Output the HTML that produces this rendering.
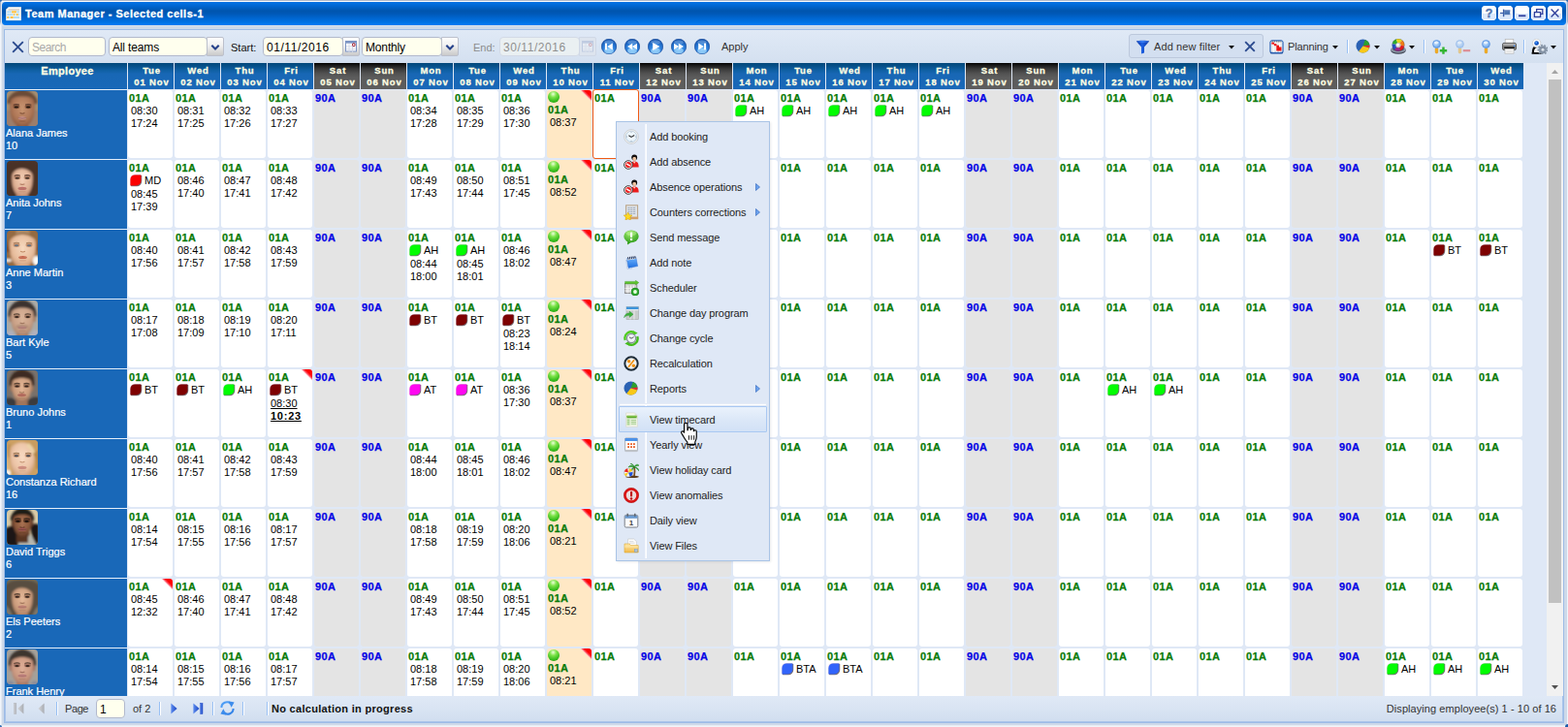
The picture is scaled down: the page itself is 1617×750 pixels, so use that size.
<!DOCTYPE html><html lang="en"><head><meta charset="utf-8"><title>Team Manager - Selected cells-1</title><style>
*{box-sizing:border-box}
html,body{margin:0;padding:0}
body{width:1617px;height:750px;overflow:hidden;background:#fff;font-family:"Liberation Sans",sans-serif;font-size:11px;color:#000;position:relative}
.a{position:absolute}
svg{display:block}
#frame{left:0;top:0;width:1617px;height:750px;background:#cdd9e9}
#edgeT{left:0;top:0;width:1617px;height:1px;background:#aeb9cb}
#edgeT2{left:0;top:1px;width:1617px;height:1px;background:#fafbfd}
#edgeL{left:0;top:2px;width:1px;height:746px;background:linear-gradient(#a4b1c8 0,#a4b1c8 20px,#f1f5fb 24px,#f1f5fb 100%)}
#edgeL2{left:1px;top:2px;width:1px;height:746px;background:#e3e9f2}
#edgeR{left:1616px;top:2px;width:1px;height:746px;background:linear-gradient(#a4b1c8 0,#a4b1c8 20px,#f1f5fb 24px,#f1f5fb 100%)}
#edgeB{left:0;top:748px;width:1617px;height:2px;background:linear-gradient(#e2e8f1,#f6f8fc)}
.cornerdot{width:2px;height:2px;background:#2f6cb4}
#title{left:2px;top:2px;width:1613px;height:24px;border-radius:4px;background:linear-gradient(#0472e4 0%,#0069d6 14%,#0055ae 38%,#0058b6 50%,#0066d0 70%,#0074e8 90%,#027af4 100%)}
#title .txt{left:24px;top:5px;color:#fff;-webkit-text-stroke:.3px #fff;font-weight:bold;font-size:11px;line-height:14px;letter-spacing:.5px;white-space:nowrap}
#sub{left:2px;top:26px;width:1613px;height:1px;background:#d9e0ea}
#panel{left:4px;top:30px;width:1609px;height:716px;border:1px solid #9dbbe6;background:#dfe8f6}
#tb{left:5px;top:31px;width:1607px;height:34px;background:linear-gradient(#e0e9f6 0%,#dae5f3 50%,#d4e0f0 100%)}
.fld{height:20px;border:1px solid #b2b9cd;border-radius:4px;background:#ffffee;font-size:12px;line-height:18px;padding:1px 0 0 3px;letter-spacing:-.15px;white-space:nowrap;overflow:hidden;color:#000}
.trg{width:18px;height:20px;border:1px solid #bcc0cc;border-radius:0 2px 2px 0;background:linear-gradient(#fefefe 0%,#f0f0f0 45%,#cacaca 100%)}
.lbl{font-size:11px;line-height:14px;margin-top:1px;white-space:nowrap;color:#111}
.sep{width:2px;height:14px;border-left:1px solid #98c0f4;border-right:1px solid #fff}
.dis{opacity:.45}
#hdr{left:5px;top:65px;width:1567px;height:27px}
.h{position:absolute;top:0;height:27px;color:#ffffe4;-webkit-text-stroke:.3px #ffffe4;font-weight:bold;font-size:9.5px;letter-spacing:.85px;line-height:12px;text-align:center;padding:2px 0 0 2px;background:linear-gradient(#03487a 0%,#07518a 12%,#1060a4 28%,#1867b5 42%,#1968b8 100%);white-space:nowrap}
.h.we{background:linear-gradient(#000 0%,#161616 7%,#383838 22%,#525252 40%,#5c5c5c 55%,#5d5d5d 100%)}
#body{left:5px;top:92px;width:1590px;height:626px;overflow:hidden;background:#dfe8f6}
.r{position:absolute;left:0;width:1567px;height:72px}
.e{position:absolute;left:0;top:0;width:126px;height:72px;background:#1968b8;border-top:1px solid #e6effa;color:#fff;font-size:11px;line-height:13px;white-space:nowrap}
.e .ph{position:absolute;left:2px;top:1px;width:32px;height:36px;border-radius:4px;overflow:hidden}
.e .nm{position:absolute;left:1px;top:38px;-webkit-text-stroke:.2px #fff}
.c{position:absolute;top:1px;width:46px;height:70px;background:#fff;border-radius:3px;padding:2px 0 0 1px;font-size:11px;line-height:13px;white-space:nowrap;overflow:hidden;color:#000}
.c.we{background:#e4e4e4}
.c.td{background:#ffe8c5;padding-top:1px}
.c.sel{border:1px solid #f05a14;padding:1px 0 0 0;left:-1px}
.c b{color:#087a08;letter-spacing:.4px;-webkit-text-stroke:.25px currentColor}
.c.we b{color:#0404e4}
.c .t{padding-left:2px}
.c .mk{display:inline-block;width:11px;height:11px;border-radius:4.5px .5px 5px .5px;vertical-align:-2px;margin:0 3px 0 2px;transform:translate(-.55px,-.6px);box-shadow:.6px .6px 0 .2px rgba(70,60,70,.75),-.4px -.4px 0 0 rgba(230,200,230,.6)}
.c .ml{height:13.500px}
.c .fl{position:absolute;right:0;top:0;width:12px;height:12px;background:linear-gradient(to bottom left,#ff0000 0%,#ff0202 31%,rgba(255,80,100,.95) 41%,rgba(255,190,200,.6) 47%,rgba(255,255,255,0) 51%)}
.c .ball{display:block;width:12px;height:12px;border-radius:6px;margin:0 0 1px 0;background:radial-gradient(circle at 45% 25%,#ecffd8 0%,#7ee44a 30%,#34ba1c 68%,#1c8a0c 100%)}
.c u{text-decoration:underline}
#sb{left:1595px;top:65px;width:17px;height:653px;background:#f1f1f1}
#sb .th{left:2px;top:17px;width:13px;height:540px;background:#c1c1c1}
#pt{left:5px;top:718px;width:1607px;height:27px;background:linear-gradient(#e0e9f6 0%,#d9e4f3 50%,#d1deef 100%);border-left:1px solid #a9c4ea;border-bottom:1px solid #a9c4ea;border-right:1px solid #a9c4ea}
#menu{left:635px;top:125px;width:159px;height:454px;border:1px solid #a9c4e6;background:#dfe8f6;box-shadow:1px 1px 2px rgba(80,90,110,.12)}
#menu .vl{left:29px;top:2px;width:2px;height:448px;border-left:1px solid #f4f7fc;border-right:1px solid #fdfeff;background:none}
.mi{position:absolute;left:2px;width:153px;height:26px;font-size:11px;line-height:14px;color:#222;white-space:nowrap;letter-spacing:-.1px}
.mi .ic{position:absolute;left:5px;top:5px;width:16px;height:16px}
.mi .tx{position:absolute;left:32px;top:6px}
.mi .ar{position:absolute;left:141px;top:9px}
.mi.hov{margin-top:-1px;height:27px;border:1px solid #a9c8f2;border-radius:1px;background:linear-gradient(#eaf2fc 0%,#dce8f8 50%,#d2e1f6 100%)}
.mi.hov .ic{left:4px;top:5px}.mi.hov .tx{left:31px;top:6px}
#msep{left:3px;top:290px;width:151px;height:2px;border-top:1px solid #e6ecf6;border-bottom:1px solid #fff;background:none}
</style></head><body>
<svg width="0" height="0" style="position:absolute">
<defs>
<radialGradient id="gball" cx="35%" cy="30%" r="75%"><stop offset="0" stop-color="#d8ffb0"/><stop offset="0.45" stop-color="#4fd62a"/><stop offset="1" stop-color="#1f9a10"/></radialGradient>
<radialGradient id="gnav" cx="50%" cy="72%" r="78%"><stop offset="0" stop-color="#66b4f8"/><stop offset="0.5" stop-color="#2a7cd8"/><stop offset="0.85" stop-color="#1458b4"/><stop offset="1" stop-color="#0c4098"/></radialGradient>
<linearGradient id="gfun" x1="0" y1="0" x2="1" y2="0"><stop offset="0" stop-color="#062c98"/><stop offset="0.45" stop-color="#1c60e4"/><stop offset="1" stop-color="#062c98"/></linearGradient>
<linearGradient id="gblue" x1="0" y1="0" x2="1" y2="0"><stop offset="0" stop-color="#5c8cf0"/><stop offset="1" stop-color="#1a44c0"/></linearGradient>
<linearGradient id="ggray" x1="0" y1="0" x2="1" y2="0"><stop offset="0" stop-color="#d4d6da"/><stop offset="1" stop-color="#a9acb2"/></linearGradient>
<radialGradient id="gglass" cx="40%" cy="35%" r="70%"><stop offset="0" stop-color="#d8ecff"/><stop offset="1" stop-color="#5a9cea"/></radialGradient>
<radialGradient id="gclock" cx="50%" cy="40%" r="70%"><stop offset="0" stop-color="#ffffff"/><stop offset="0.7" stop-color="#e6eef5"/><stop offset="1" stop-color="#9fb0c0"/></radialGradient>
<radialGradient id="ggreen2" cx="40%" cy="30%" r="80%"><stop offset="0" stop-color="#9be86a"/><stop offset="1" stop-color="#2a9a18"/></radialGradient>
<linearGradient id="gfold" x1="0" y1="0" x2="0" y2="1"><stop offset="0" stop-color="#ffe9a8"/><stop offset="1" stop-color="#f2b94a"/></linearGradient>
<linearGradient id="gnote" x1="0" y1="0" x2="0" y2="1"><stop offset="0" stop-color="#6db4ff"/><stop offset="1" stop-color="#1f6fe0"/></linearGradient>
</defs></svg>
<div id="frame" class="a"></div><div id="edgeT" class="a"></div><div id="edgeT2" class="a"></div><div id="edgeL" class="a"></div><div id="edgeL2" class="a"></div><div id="edgeR" class="a"></div><div id="edgeB" class="a"></div>
<div class="a cornerdot" style="left:0;top:0;border-radius:0 0 3px 0"></div><div class="a cornerdot" style="left:1615px;top:0;border-radius:0 0 0 3px"></div><div class="a cornerdot" style="left:0;top:748px;border-radius:0 3px 0 0"></div><div class="a cornerdot" style="left:1614px;top:747px;width:3px;height:3px;border-radius:3px 0 0 0;background:#1a5aa8"></div>
<div id="title" class="a"><div class="a" style="left:4px;top:5px"><svg width="16" height="16" viewBox="0 0 16 16" ><path d="M3 0.200H15.800V14H0.200V2.800z" fill="#fdfcf8" stroke="#ece6da" stroke-width="0.4"/><rect x="2.600" y="2.300" width="11.400" height="1.400" fill="#cfc8c0"/><rect x="1.4" y="4.3" width="4.50" height="2.1" fill="#a9d9f9"/><rect x="6.1" y="4.3" width="4.80" height="2.1" fill="#ffb92c"/><rect x="11.1" y="4.3" width="2.90" height="2.1" fill="#a9d9f9"/><rect x="1.4" y="7.1" width="6.20" height="2.1" fill="#a9d9f9"/><rect x="7.9" y="7.1" width="1.30" height="2.1" fill="#ffb92c"/><rect x="9.5" y="7.1" width="1.20" height="2.1" fill="#a9d9f9"/><rect x="11" y="7.1" width="1.70" height="2.1" fill="#ffb92c"/><rect x="12.9" y="7.1" width="1.10" height="2.1" fill="#a9d9f9"/><rect x="1.4" y="9.9" width="1.40" height="2.1" fill="#ffb92c"/><rect x="3" y="9.9" width="1.60" height="2.1" fill="#a9d9f9"/><rect x="4.8" y="9.9" width="2.90" height="2.1" fill="#ffb92c"/><rect x="8" y="9.9" width="6.00" height="2.1" fill="#a9d9f9"/><path d="M3.700 4.300v7.700M6 4.300v7.700M8.300 4.300v7.700M10.600 4.300v7.700M12.800 4.300v7.700" stroke="#fff" stroke-width="0.35" opacity="0.7"/></svg></div><div class="a txt">Team Manager - Selected cells-1</div>
<div class="a" style="left:1526px;top:4px"><svg width="15" height="15" viewBox="0 0 15 15" ><path d="M2 0h11l2 2v11l-2 2H2l-2-2V2z" fill="#fdfeff"/><path d="M1 8h13v5l-1.4 1.4H2.4L1 13z" fill="#dce8fb"/><text x="7.5" y="12" font-family="Liberation Sans, sans-serif" font-weight="bold" font-size="12.500" fill="#5878b0" stroke="#5878b0" stroke-width="0.400" text-anchor="middle">?</text></svg></div>
<div class="a" style="left:1543px;top:4px"><svg width="15" height="15" viewBox="0 0 15 15" ><path d="M2 0h11l2 2v11l-2 2H2l-2-2V2z" fill="#fdfeff"/><path d="M1 8h13v5l-1.4 1.4H2.4L1 13z" fill="#dce8fb"/><path d="M2 7.5h4" stroke="#3b5ea8" stroke-width="1.2"/><path d="M5.6 3.6v7.6" stroke="#3b5ea8" stroke-width="1.4"/><rect x="6.2" y="5.2" width="6" height="4" fill="#4a74b4"/><path d="M6.2 4.9h6.2" stroke="#3b5ea8" stroke-width="1"/></svg></div>
<div class="a" style="left:1560px;top:4px"><svg width="15" height="15" viewBox="0 0 15 15" ><path d="M2 0h11l2 2v11l-2 2H2l-2-2V2z" fill="#fdfeff"/><path d="M1 8h13v5l-1.4 1.4H2.4L1 13z" fill="#dce8fb"/><rect x="4" y="9.4" width="7.4" height="1.8" fill="#30409c"/></svg></div>
<div class="a" style="left:1577px;top:4px"><svg width="15" height="15" viewBox="0 0 15 15" ><path d="M2 0h11l2 2v11l-2 2H2l-2-2V2z" fill="#fdfeff"/><path d="M1 8h13v5l-1.4 1.4H2.4L1 13z" fill="#dce8fb"/><rect x="5.6" y="3.6" width="6.2" height="4.8" fill="none" stroke="#30409c" stroke-width="1.3"/><rect x="3.4" y="6.6" width="6.2" height="4.8" fill="#f4f8ff" stroke="#30409c" stroke-width="1.3"/></svg></div>
<div class="a" style="left:1594px;top:4px"><svg width="15" height="15" viewBox="0 0 15 15" ><path d="M2 0h11l2 2v11l-2 2H2l-2-2V2z" fill="#fdfeff"/><path d="M1 8h13v5l-1.4 1.4H2.4L1 13z" fill="#dce8fb"/><path d="M3.6 3.6l7.8 7.8M11.4 3.6l-7.8 7.8" stroke="#30409c" stroke-width="1.4"/></svg></div>
</div><div id="sub" class="a"></div>
<div id="panel" class="a"></div>
<div id="tb" class="a"></div>
<div class="a" style="left:11.5px;top:41.5px;"><svg width="13" height="13" viewBox="0 0 13 13" ><path d="M1.2 1.2L11.8 11.8M11.8 1.2L1.2 11.8" stroke="#2b4a8e" stroke-width="1.9" fill="none" stroke-linecap="butt"/></svg></div>
<div class="a fld" style="left:29px;top:38px;width:80px"><span style="color:#a9a9a9;letter-spacing:-.5px">Search</span></div>
<div class="a fld" style="left:112px;top:38px;width:102px">All teams</div>
<div class="a trg" style="left:213px;top:38px;"><div class="a" style="left:3px;top:6px"><svg width="10" height="8" viewBox="0 0 10 8" ><path d="M1.3 1.8L5 5.6L8.7 1.8" stroke="#25408a" stroke-width="2.1" fill="none"/></svg></div></div>
<div class="a lbl" style="left:238px;top:41px;">Start:</div>
<div class="a fld" style="left:271px;top:38px;width:83px"><span style="letter-spacing:.55px">01/11/2016</span></div>
<div class="a trg" style="left:353px;top:38px;"><div class="a" style="left:2px;top:3px"><svg width="12" height="12" viewBox="0 0 12 12" ><g opacity="1"><rect x="0.5" y="0.5" width="11" height="10.500" fill="#fff" stroke="#7c94c4"/><rect x="0.5" y="0.5" width="11" height="2.200" fill="#7c94c4"/><path d="M1 6h10M1 8.8h10M4 3v9M7.5 3v9" stroke="#cfd6e6" stroke-width="0.9"/><circle cx="8.8" cy="4.2" r="1.4" fill="#fff" stroke="#a01020" stroke-width="1"/></g></svg></div></div>
<div class="a fld" style="left:373px;top:38px;width:83px">Monthly</div>
<div class="a trg" style="left:455px;top:38px;"><div class="a" style="left:3px;top:6px"><svg width="10" height="8" viewBox="0 0 10 8" ><path d="M1.3 1.8L5 5.6L8.7 1.8" stroke="#25408a" stroke-width="2.1" fill="none"/></svg></div></div>
<div class="a lbl" style="left:488px;top:41px;color:#8c8c8c">End:</div>
<div class="a fld" style="left:515px;top:38px;width:83px;background:#eaf0f2;border-color:#d3dae6;color:#909090"><span style="letter-spacing:.55px">30/11/2016</span></div>
<div class="a trg" style="left:597px;top:38px;background:#dde4ee;border-color:#d0d8e6"><div class="a" style="left:2px;top:3px"><svg width="12" height="12" viewBox="0 0 12 12" ><g opacity="0.3"><rect x="0.5" y="0.5" width="11" height="10.500" fill="#fff" stroke="#7c94c4"/><rect x="0.5" y="0.5" width="11" height="2.200" fill="#7c94c4"/><path d="M1 6h10M1 8.8h10M4 3v9M7.5 3v9" stroke="#cfd6e6" stroke-width="0.9"/><circle cx="8.8" cy="4.2" r="1.4" fill="#fff" stroke="#a01020" stroke-width="1"/></g></svg></div></div>
<div class="a" style="left:620px;top:40px;"><svg width="16" height="16" viewBox="0 0 16 16" ><circle cx="8" cy="8" r="7.7" fill="url(#gnav)" stroke="#0c3f92" stroke-width="0.6"/><ellipse cx="8" cy="12.4" rx="4.8" ry="2.8" fill="#b4e4ff" opacity="0.6"/><ellipse cx="8" cy="3.6" rx="4.8" ry="2.2" fill="#fff" opacity="0.22"/><rect x="3.9" y="4.6" width="2" height="6.8" fill="#fff"/><path d="M11.8 4.400v7.200L6.200 8z" fill="#fff"/></svg></div>
<div class="a" style="left:644px;top:40px;"><svg width="16" height="16" viewBox="0 0 16 16" ><circle cx="8" cy="8" r="7.7" fill="url(#gnav)" stroke="#0c3f92" stroke-width="0.6"/><ellipse cx="8" cy="12.4" rx="4.8" ry="2.8" fill="#b4e4ff" opacity="0.6"/><ellipse cx="8" cy="3.6" rx="4.8" ry="2.2" fill="#fff" opacity="0.22"/><path d="M8.200 4.800v6.400L3 8z" fill="#fff"/><path d="M13 4.800v6.400L7.800 8z" fill="#fff"/></svg></div>
<div class="a" style="left:668px;top:40px;"><svg width="16" height="16" viewBox="0 0 16 16" ><circle cx="8" cy="8" r="7.7" fill="url(#gnav)" stroke="#0c3f92" stroke-width="0.6"/><ellipse cx="8" cy="12.4" rx="4.8" ry="2.8" fill="#b4e4ff" opacity="0.6"/><ellipse cx="8" cy="3.6" rx="4.8" ry="2.2" fill="#fff" opacity="0.22"/><path d="M5.200 4v8L12.400 8z" fill="#fff"/></svg></div>
<div class="a" style="left:692px;top:40px;"><svg width="16" height="16" viewBox="0 0 16 16" ><circle cx="8" cy="8" r="7.7" fill="url(#gnav)" stroke="#0c3f92" stroke-width="0.6"/><ellipse cx="8" cy="12.4" rx="4.8" ry="2.8" fill="#b4e4ff" opacity="0.6"/><ellipse cx="8" cy="3.6" rx="4.8" ry="2.2" fill="#fff" opacity="0.22"/><path d="M3 4.800v6.400L8.200 8z" fill="#fff"/><path d="M7.800 4.800v6.400L13 8z" fill="#fff"/></svg></div>
<div class="a" style="left:716px;top:40px;"><svg width="16" height="16" viewBox="0 0 16 16" ><circle cx="8" cy="8" r="7.7" fill="url(#gnav)" stroke="#0c3f92" stroke-width="0.6"/><ellipse cx="8" cy="12.4" rx="4.8" ry="2.8" fill="#b4e4ff" opacity="0.6"/><ellipse cx="8" cy="3.6" rx="4.8" ry="2.2" fill="#fff" opacity="0.22"/><path d="M4.200 4.400v7.200L9.800 8z" fill="#fff"/><rect x="10.100" y="4.600" width="2" height="6.800" fill="#fff"/></svg></div>
<div class="a lbl" style="left:744px;top:40px;color:#333">Apply</div>
<div class="a" style="left:1164px;top:35px;width:139px;height:25px;border:1px solid #bcc8dc;border-radius:3px;background:#d3dff0"></div>
<div class="a" style="left:1171px;top:41px;"><svg width="15" height="15" viewBox="0 0 15 15" ><path d="M0.8 1.6C3 0.4 12 0.4 14.2 1.6L9 7.6V13.6L6 14.4V7.6z" fill="url(#gfun)"/><ellipse cx="7.5" cy="1.900" rx="5.800" ry="1" fill="#4a90ff" opacity="0.600"/></svg></div>
<div class="a lbl" style="left:1190px;top:40px;color:#333;letter-spacing:.12px">Add new filter</div>
<div class="a" style="left:1267px;top:47px;"><svg width="6" height="4" viewBox="0 0 6 4" ><path d="M0 0h6L3 3.4z" fill="#111"/></svg></div>
<div class="a" style="left:1283px;top:42px;"><svg width="12" height="12" viewBox="0 0 12 12" ><path d="M1.2 1.2L10.8 10.8M10.8 1.2L1.2 10.8" stroke="#2b4a8e" stroke-width="1.9" fill="none" stroke-linecap="butt"/></svg></div>
<div class="a" style="left:1309px;top:41px;"><svg width="15" height="15" viewBox="0 0 15 15" ><rect x="0.600" y="0.600" width="13.800" height="14" rx="2.200" fill="#1c4c9c"/><rect x="0.600" y="0.600" width="13.800" height="12.800" rx="2.200" fill="#3a74c4"/><rect x="1.600" y="1.400" width="11.800" height="11.400" rx="1" fill="#ececec"/><path d="M4.600 2.600v10.200M7.600 2.600v10.200M10.600 2.600v10.200" stroke="#fdfdfd" stroke-width="1"/><path d="M2.600 1.900h9.800" stroke="#4c4c54" stroke-width="0.900" stroke-dasharray="1.300 0.900"/><rect x="2.400" y="2.700" width="2.600" height="1.900" fill="#ec1010"/><rect x="4.800" y="4.200" width="2.700" height="2" fill="#ec1010"/><rect x="7.300" y="5.700" width="2.700" height="5.800" fill="#ec1010"/><rect x="9.800" y="7.500" width="2.700" height="4" fill="#ec1010"/></svg></div>
<div class="a lbl" style="left:1328px;top:40px;color:#333;letter-spacing:-.15px">Planning</div>
<div class="a" style="left:1374px;top:47px;"><svg width="6" height="4" viewBox="0 0 6 4" ><path d="M0 0h6L3 3.4z" fill="#111"/></svg></div>
<div class="a sep" style="left:1389px;top:41px;"></div>
<div class="a" style="left:1398px;top:39.5px;"><svg width="15" height="15" viewBox="0 0 15 15" ><circle cx="7.5" cy="7.5" r="7" fill="#2a62b4"/><path d="M7.5 7.5L9.8 0.9A7 7 0 0 1 14.4 6.6z" fill="#2da02d"/><path d="M7.5 7.5L14.4 6.6A7 7 0 0 1 14.2 9.6z" fill="#e82828"/><path d="M7.5 7.5L14.2 9.6A7 7 0 0 1 3.2 13z" fill="#f8c818"/></svg></div>
<div class="a" style="left:1417px;top:47px;"><svg width="6" height="4" viewBox="0 0 6 4" ><path d="M0 0h6L3 3.4z" fill="#111"/></svg></div>
<div class="a" style="left:1433.5px;top:39.5px;"><svg width="16" height="16" viewBox="0 0 16 16" ><ellipse cx="8" cy="12" rx="7.800" ry="3.800" fill="#3e4654"/><ellipse cx="8" cy="11" rx="7.800" ry="3.600" fill="#8e98a8"/><ellipse cx="8" cy="10.600" rx="6" ry="2.400" fill="#5a6474"/><path d="M8 6.300L1.80 5.21A6.300 6.300 0 0 1 5.85 0.38z" fill="#2cac2c"/><path d="M8 6.300L5.85 0.38A6.300 6.300 0 0 1 12.05 1.47z" fill="#e8d41c"/><path d="M8 6.300L12.05 1.47A6.300 6.300 0 0 1 14.20 7.39z" fill="#f07c14"/><path d="M8 6.300L14.20 7.39A6.300 6.300 0 0 1 10.15 12.22z" fill="#e01c1c"/><path d="M8 6.300L10.15 12.22A6.300 6.300 0 0 1 3.95 11.13z" fill="#a0248c"/><path d="M8 6.300L3.95 11.13A6.300 6.300 0 0 1 1.80 5.21z" fill="#2450c4"/><circle cx="8" cy="6.300" r="6.300" fill="none" stroke="#1c2430" stroke-width="0.500" opacity="0.500"/><circle cx="8" cy="6.600" r="2.700" fill="#c8c4c0"/><circle cx="7.600" cy="6.200" r="1.500" fill="#f8f8f8"/></svg></div>
<div class="a" style="left:1453px;top:47px;"><svg width="6" height="4" viewBox="0 0 6 4" ><path d="M0 0h6L3 3.4z" fill="#111"/></svg></div>
<div class="a sep" style="left:1468px;top:41px;"></div>
<div class="a" style="left:1477px;top:40.5px;"><svg width="16" height="16" viewBox="0 0 16 16" ><g opacity="1"><rect x="3.100" y="8.200" width="2.800" height="5.800" rx="1.200" fill="#f4ac1c" stroke="#d08c10" stroke-width="0.400"/><circle cx="4.500" cy="4.500" r="3.900" fill="url(#gglass)" stroke="#5c94e0" stroke-width="0.900"/><ellipse cx="4.300" cy="3" rx="2.200" ry="1.200" fill="#fff" opacity="0.600"/><path d="M7.800 11.200h7.400M11.500 7.600v7.200" stroke="#30b430" stroke-width="2.400"/></g></svg></div>
<div class="a" style="left:1501px;top:40.5px;"><svg width="16" height="16" viewBox="0 0 16 16" ><g opacity="0.5"><rect x="3.100" y="8.200" width="2.800" height="5.800" rx="1.200" fill="#f4ac1c" stroke="#d08c10" stroke-width="0.400"/><circle cx="4.500" cy="4.500" r="3.900" fill="url(#gglass)" stroke="#5c94e0" stroke-width="0.900"/><ellipse cx="4.300" cy="3" rx="2.200" ry="1.200" fill="#fff" opacity="0.600"/><path d="M7.800 11.200h7.400" stroke="#e03838" stroke-width="2.200"/></g></svg></div>
<div class="a" style="left:1527.5px;top:40.5px;"><svg width="16" height="16" viewBox="0 0 16 16" ><g opacity="1"><rect x="3.100" y="8.200" width="2.800" height="5.800" rx="1.200" fill="#f4ac1c" stroke="#d08c10" stroke-width="0.400"/><circle cx="4.500" cy="4.500" r="3.900" fill="url(#gglass)" stroke="#5c94e0" stroke-width="0.900"/><ellipse cx="4.300" cy="3" rx="2.200" ry="1.200" fill="#fff" opacity="0.600"/></g></svg></div>
<div class="a" style="left:1549px;top:40px;"><svg width="15" height="16" viewBox="0 0 15 16" ><rect x="3.200" y="0.400" width="8.600" height="5.200" fill="#fcfcfc" stroke="#b4b4b4" stroke-width="0.700"/><rect x="0.500" y="4.400" width="14" height="7.200" rx="1.500" fill="#868686" stroke="#4c4c4c" stroke-width="0.800"/><rect x="1.200" y="5" width="12.600" height="1.600" fill="#b4b4b4"/><rect x="2.200" y="8.400" width="10.600" height="1.800" fill="#141414"/><rect x="3" y="10.400" width="9" height="4.800" fill="#fcfcfc" stroke="#b4b4b4" stroke-width="0.700"/><path d="M4.400 12.200h6.200M4.400 13.600h6.200" stroke="#d8d8d8" stroke-width="0.700"/><circle cx="12.600" cy="7.200" r="0.800" fill="#3a8cff"/></svg></div>
<div class="a sep" style="left:1571px;top:41px;"></div>
<div class="a" style="left:1579px;top:40px;"><svg width="17" height="16" viewBox="0 0 17 16" ><path d="M2.200 14.600C1.800 10.400 3.200 8.600 5.600 8" stroke="#0c0c0c" stroke-width="2.400" fill="none"/><path d="M0.600 14.800h10" stroke="#0c0c0c" stroke-width="2"/><path d="M3 14C3 11 4 9.600 6 9.200L8.600 14z" fill="#f4f4f4"/><circle cx="5.600" cy="4.500" r="4.300" fill="#fafafa" stroke="#c8c8c8" stroke-width="0.700"/><circle cx="5.600" cy="4.500" r="2.300" fill="#0c50c0"/><circle cx="5.200" cy="3.900" r="1" fill="#4c9cff"/><circle cx="12" cy="11.200" r="3.900" fill="#8492a4"/><circle cx="12" cy="11.200" r="4.600" fill="none" stroke="#8492a4" stroke-width="1.700" stroke-dasharray="1.800 1.400"/><circle cx="12" cy="11.200" r="1.500" fill="#dce4ec"/></svg></div>
<div class="a" style="left:1599px;top:47px;"><svg width="6" height="4" viewBox="0 0 6 4" ><path d="M0 0h6L3 3.4z" fill="#111"/></svg></div>
<div id="hdr" class="a">
<div class="h" style="left:0;width:126px;font-size:11px;letter-spacing:.3px;padding:2px 0 0 3px;line-height:13px">Employee</div>
<div class="h" style="left:127px;width:47px">Tue<br>01 Nov</div>
<div class="h" style="left:175px;width:47px">Wed<br>02 Nov</div>
<div class="h" style="left:223px;width:47px">Thu<br>03 Nov</div>
<div class="h" style="left:271px;width:47px">Fri<br>04 Nov</div>
<div class="h we" style="left:319px;width:47px">Sat<br>05 Nov</div>
<div class="h we" style="left:367px;width:47px">Sun<br>06 Nov</div>
<div class="h" style="left:415px;width:47px">Mon<br>07 Nov</div>
<div class="h" style="left:463px;width:47px">Tue<br>08 Nov</div>
<div class="h" style="left:511px;width:47px">Wed<br>09 Nov</div>
<div class="h" style="left:559px;width:47px">Thu<br>10 Nov</div>
<div class="h" style="left:607px;width:47px">Fri<br>11 Nov</div>
<div class="h we" style="left:655px;width:47px">Sat<br>12 Nov</div>
<div class="h we" style="left:703px;width:47px">Sun<br>13 Nov</div>
<div class="h" style="left:751px;width:47px">Mon<br>14 Nov</div>
<div class="h" style="left:799px;width:47px">Tue<br>15 Nov</div>
<div class="h" style="left:847px;width:47px">Wed<br>16 Nov</div>
<div class="h" style="left:895px;width:47px">Thu<br>17 Nov</div>
<div class="h" style="left:943px;width:47px">Fri<br>18 Nov</div>
<div class="h we" style="left:991px;width:47px">Sat<br>19 Nov</div>
<div class="h we" style="left:1039px;width:47px">Sun<br>20 Nov</div>
<div class="h" style="left:1087px;width:47px">Mon<br>21 Nov</div>
<div class="h" style="left:1135px;width:47px">Tue<br>22 Nov</div>
<div class="h" style="left:1183px;width:47px">Wed<br>23 Nov</div>
<div class="h" style="left:1231px;width:47px">Thu<br>24 Nov</div>
<div class="h" style="left:1279px;width:47px">Fri<br>25 Nov</div>
<div class="h we" style="left:1327px;width:47px">Sat<br>26 Nov</div>
<div class="h we" style="left:1375px;width:47px">Sun<br>27 Nov</div>
<div class="h" style="left:1423px;width:47px">Mon<br>28 Nov</div>
<div class="h" style="left:1471px;width:47px">Tue<br>29 Nov</div>
<div class="h" style="left:1519px;width:47px">Wed<br>30 Nov</div>
</div>
<div id="body" class="a">
<div class="r" style="top:0px">
<div class="e"><div class="ph"><svg width="32" height="36" viewBox="0 0 32 36" style="display:block"><defs><filter id="fb0" x="-20%" y="-20%" width="140%" height="140%"><feGaussianBlur stdDeviation="1.0"/></filter><filter id="fb0s" x="-30%" y="-30%" width="160%" height="160%"><feGaussianBlur stdDeviation="0.7"/></filter><radialGradient id="sk0" cx="50%" cy="40%" r="65%"><stop offset="0" stop-color="#c89470"/><stop offset="0.6" stop-color="#ae7656"/><stop offset="1" stop-color="#7e5038"/></radialGradient></defs><rect width="32" height="36" fill="#a48e72"/><g filter="url(#fb0)"><rect x="-2" y="20" width="36" height="20" fill="#9c7e6c"/><path d="M0.6999999999999993 13C-0.8000000000000007 5 10 -1.5 16 -1.5S32.8 5 31.3 13z" fill="#6a4c38"/><rect x="10" y="32" width="12" height="12" fill="#7e5038"/><path d="M3.1999999999999993 16.3C3.1999999999999993 5.5 7.040000000000001 3.5 16 3.5S28.8 5.5 28.8 16.3C28.8 25.3 26.496000000000002 34 19 37Q16 38.2 13 37C5.504 34 3.1999999999999993 25.3 3.1999999999999993 16.3z" fill="url(#sk0)"/><path d="M2.1999999999999993 11C1.1999999999999993 3.5 10 -0.5 16 -0.5S30.8 3.5 29.8 11C28.8 7.5 23 5.5 16 5.5S3.1999999999999993 7.5 2.1999999999999993 11z" fill="#6a4c38"/></g><g filter="url(#fb0s)"><ellipse cx="9.856" cy="16.0" rx="3.500" ry="2.200" fill="#7e5038" opacity="0.85"/><ellipse cx="22.144" cy="16.0" rx="3.500" ry="2.200" fill="#7e5038" opacity="0.85"/><ellipse cx="9.856" cy="16.6" rx="2.200" ry="1" fill="#1c100c" opacity="0.9"/><ellipse cx="22.144" cy="16.6" rx="2.200" ry="1" fill="#1c100c" opacity="0.9"/><path d="M6.656 14.3q3.200-1.500 6.200-.2M19.144 14.100000000000001q3-1.300 6.200 .2" stroke="#4a3024" stroke-width="1.100" fill="none" opacity="0.8"/><path d="M14.8 17.3L14.5 22.3h3L17.2 17.3z" fill="#c89470" opacity="0.6"/><path d="M13.6 22.6q2.400 1.400 4.800 0" stroke="#7e5038" stroke-width="1.100" fill="none"/><ellipse cx="16" cy="27.8" rx="4.400" ry="1.600" fill="#cc9494"/><path d="M11.6 27.7q4.400 .8 8.800 0" stroke="#7e5038" stroke-width="0.600" fill="none"/><ellipse cx="16" cy="31.0" rx="3.600" ry="1" fill="#7e5038" opacity="0.35"/></g></svg></div><div class="nm">Alana James<br>10</div></div>
<div class="c" style="left:127px"><b>01A</b><div class="t">08:30</div><div class="t">17:24</div></div>
<div class="c" style="left:175px"><b>01A</b><div class="t">08:31</div><div class="t">17:25</div></div>
<div class="c" style="left:223px"><b>01A</b><div class="t">08:32</div><div class="t">17:26</div></div>
<div class="c" style="left:271px"><b>01A</b><div class="t">08:33</div><div class="t">17:27</div></div>
<div class="c we" style="left:319px"><b>90A</b></div>
<div class="c we" style="left:367px"><b>90A</b></div>
<div class="c" style="left:415px"><b>01A</b><div class="t">08:34</div><div class="t">17:28</div></div>
<div class="c" style="left:463px"><b>01A</b><div class="t">08:35</div><div class="t">17:29</div></div>
<div class="c" style="left:511px"><b>01A</b><div class="t">08:36</div><div class="t">17:30</div></div>
<div class="c td" style="left:559px"><i class="ball"></i><b>01A</b><div class="t">08:37</div><i class="fl"></i></div>
<div class="c sel" style="left:606px;width:48px;height:72px;top:0"><div style="padding:1px 0 0 1px"><b>01A</b></div></div>
<div class="c we" style="left:655px"><b>90A</b></div>
<div class="c we" style="left:703px"><b>90A</b></div>
<div class="c" style="left:751px"><b>01A</b><div class="ml"><i class="mk" style="background:#02fd02"></i>AH</div></div>
<div class="c" style="left:799px"><b>01A</b><div class="ml"><i class="mk" style="background:#02fd02"></i>AH</div></div>
<div class="c" style="left:847px"><b>01A</b><div class="ml"><i class="mk" style="background:#02fd02"></i>AH</div></div>
<div class="c" style="left:895px"><b>01A</b><div class="ml"><i class="mk" style="background:#02fd02"></i>AH</div></div>
<div class="c" style="left:943px"><b>01A</b><div class="ml"><i class="mk" style="background:#02fd02"></i>AH</div></div>
<div class="c we" style="left:991px"><b>90A</b></div>
<div class="c we" style="left:1039px"><b>90A</b></div>
<div class="c" style="left:1087px"><b>01A</b></div>
<div class="c" style="left:1135px"><b>01A</b></div>
<div class="c" style="left:1183px"><b>01A</b></div>
<div class="c" style="left:1231px"><b>01A</b></div>
<div class="c" style="left:1279px"><b>01A</b></div>
<div class="c we" style="left:1327px"><b>90A</b></div>
<div class="c we" style="left:1375px"><b>90A</b></div>
<div class="c" style="left:1423px"><b>01A</b></div>
<div class="c" style="left:1471px"><b>01A</b></div>
<div class="c" style="left:1519px"><b>01A</b></div>
</div>
<div class="r" style="top:72px">
<div class="e"><div class="ph"><svg width="32" height="36" viewBox="0 0 32 36" style="display:block"><defs><filter id="fb1" x="-20%" y="-20%" width="140%" height="140%"><feGaussianBlur stdDeviation="1.0"/></filter><filter id="fb1s" x="-30%" y="-30%" width="160%" height="160%"><feGaussianBlur stdDeviation="0.7"/></filter><radialGradient id="sk1" cx="50%" cy="40%" r="65%"><stop offset="0" stop-color="#f2cdb4"/><stop offset="0.6" stop-color="#e0b296"/><stop offset="1" stop-color="#b07c62"/></radialGradient></defs><rect width="32" height="36" fill="#4c342a"/><g filter="url(#fb1)"><path d="M-3 40V12C-2 2 6 0 16 0S34 2 35 12V40z" fill="#4a3228"/><rect x="10" y="32" width="12" height="12" fill="#b07c62"/><path d="M5.199999999999999 17.4C5.199999999999999 8 8.440000000000001 6 16 6S26.8 8 26.8 17.4C26.8 26.4 24.64 34 19 37Q16 38.2 13 37C7.359999999999999 34 5.199999999999999 26.4 5.199999999999999 17.4z" fill="url(#sk1)"/><path d="M3.6999999999999993 18C3.1999999999999993 7 10 3 16 3S28.8 7 28.3 18C26.8 11.5 22 8.5 16 8.0S5.199999999999999 11.5 3.6999999999999993 18z" fill="#4a3228"/></g><g filter="url(#fb1s)"><ellipse cx="10.815999999999999" cy="17.099999999999998" rx="3.500" ry="2.200" fill="#b07c62" opacity="0.85"/><ellipse cx="21.184" cy="17.099999999999998" rx="3.500" ry="2.200" fill="#b07c62" opacity="0.85"/><ellipse cx="10.815999999999999" cy="17.7" rx="2.200" ry="1" fill="#3a2a22" opacity="0.9"/><ellipse cx="21.184" cy="17.7" rx="2.200" ry="1" fill="#3a2a22" opacity="0.9"/><path d="M7.615999999999999 15.399999999999999q3.200-1.500 6.200-.2M18.184 15.2q3-1.300 6.200 .2" stroke="#4a3026" stroke-width="1.100" fill="none" opacity="0.8"/><path d="M14.8 18.4L14.5 23.4h3L17.2 18.4z" fill="#f2cdb4" opacity="0.6"/><path d="M13.6 23.7q2.400 1.400 4.800 0" stroke="#b07c62" stroke-width="1.100" fill="none"/><ellipse cx="16" cy="28.4" rx="4.400" ry="1.600" fill="#c06c6c"/><path d="M11.6 28.299999999999997q4.400 .8 8.800 0" stroke="#b07c62" stroke-width="0.600" fill="none"/><ellipse cx="16" cy="31.599999999999998" rx="3.600" ry="1" fill="#b07c62" opacity="0.35"/></g></svg></div><div class="nm">Anita Johns<br>7</div></div>
<div class="c" style="left:127px"><b>01A</b><div class="ml"><i class="mk" style="background:#fb0202"></i>MD</div><div class="t">08:45</div><div class="t">17:39</div></div>
<div class="c" style="left:175px"><b>01A</b><div class="t">08:46</div><div class="t">17:40</div></div>
<div class="c" style="left:223px"><b>01A</b><div class="t">08:47</div><div class="t">17:41</div></div>
<div class="c" style="left:271px"><b>01A</b><div class="t">08:48</div><div class="t">17:42</div></div>
<div class="c we" style="left:319px"><b>90A</b></div>
<div class="c we" style="left:367px"><b>90A</b></div>
<div class="c" style="left:415px"><b>01A</b><div class="t">08:49</div><div class="t">17:43</div></div>
<div class="c" style="left:463px"><b>01A</b><div class="t">08:50</div><div class="t">17:44</div></div>
<div class="c" style="left:511px"><b>01A</b><div class="t">08:51</div><div class="t">17:45</div></div>
<div class="c td" style="left:559px"><i class="ball"></i><b>01A</b><div class="t">08:52</div><i class="fl"></i></div>
<div class="c" style="left:607px"><b>01A</b></div>
<div class="c we" style="left:655px"><b>90A</b></div>
<div class="c we" style="left:703px"><b>90A</b></div>
<div class="c" style="left:751px"><b>01A</b></div>
<div class="c" style="left:799px"><b>01A</b></div>
<div class="c" style="left:847px"><b>01A</b></div>
<div class="c" style="left:895px"><b>01A</b></div>
<div class="c" style="left:943px"><b>01A</b></div>
<div class="c we" style="left:991px"><b>90A</b></div>
<div class="c we" style="left:1039px"><b>90A</b></div>
<div class="c" style="left:1087px"><b>01A</b></div>
<div class="c" style="left:1135px"><b>01A</b></div>
<div class="c" style="left:1183px"><b>01A</b></div>
<div class="c" style="left:1231px"><b>01A</b></div>
<div class="c" style="left:1279px"><b>01A</b></div>
<div class="c we" style="left:1327px"><b>90A</b></div>
<div class="c we" style="left:1375px"><b>90A</b></div>
<div class="c" style="left:1423px"><b>01A</b></div>
<div class="c" style="left:1471px"><b>01A</b></div>
<div class="c" style="left:1519px"><b>01A</b></div>
</div>
<div class="r" style="top:144px">
<div class="e"><div class="ph"><svg width="32" height="36" viewBox="0 0 32 36" style="display:block"><defs><filter id="fb2" x="-20%" y="-20%" width="140%" height="140%"><feGaussianBlur stdDeviation="1.0"/></filter><filter id="fb2s" x="-30%" y="-30%" width="160%" height="160%"><feGaussianBlur stdDeviation="0.7"/></filter><radialGradient id="sk2" cx="50%" cy="40%" r="65%"><stop offset="0" stop-color="#f6d8be"/><stop offset="0.6" stop-color="#e8be9e"/><stop offset="1" stop-color="#c08a66"/></radialGradient></defs><rect width="32" height="36" fill="#946640"/><g filter="url(#fb2)"><path d="M-3 40V12C-2 2 6 -3 16.5 -3S34 2 35 12V40z" fill="#946a42"/><rect x="10.5" y="33" width="12" height="12" fill="#c08a66"/><path d="M2.9000000000000004 15C2.9000000000000004 5 6.98 3 16.5 3S30.1 5 30.1 15C30.1 24 28.06 35 19.5 38Q16.5 39.2 13.5 38C4.940000000000001 35 2.9000000000000004 24 2.9000000000000004 15z" fill="url(#sk2)"/><path d="M1.4000000000000004 13C0.9000000000000004 4 10.5 0 16.5 0S32.1 4 31.6 13C30.1 7.5 22.5 4.5 16.5 4.0S2.9000000000000004 7.5 1.4000000000000004 13z" fill="#946a42"/><path d="M9.5 2Q16.5 -0.5 23.5 2" stroke="#d8c0a0" stroke-width="1.600" fill="none" opacity="0.7"/><ellipse cx="30.500" cy="31" rx="3.600" ry="5" fill="#fcf9f6"/><ellipse cx="1.500" cy="30.500" rx="3.500" ry="1.500" fill="#f4ece4"/><path d="M-1 22V8Q1 14 3.500 22z" fill="#7a4a2c"/><path d="M33 22V8Q31 14 30 20z" fill="#7a4a2c"/></g><g filter="url(#fb2s)"><ellipse cx="9.972000000000001" cy="14.7" rx="3.500" ry="2.200" fill="#c08a66" opacity="0.85"/><ellipse cx="23.028" cy="14.7" rx="3.500" ry="2.200" fill="#c08a66" opacity="0.85"/><ellipse cx="9.972000000000001" cy="15.3" rx="2.200" ry="1" fill="#5a6e84" opacity="0.9"/><ellipse cx="23.028" cy="15.3" rx="2.200" ry="1" fill="#5a6e84" opacity="0.9"/><path d="M6.772000000000001 13q3.200-1.500 6.200-.2M20.028 12.8q3-1.300 6.200 .2" stroke="#a07858" stroke-width="1.100" fill="none" opacity="0.8"/><path d="M15.3 16L15.0 21h3L17.7 16z" fill="#f6d8be" opacity="0.6"/><path d="M14.1 21.3q2.400 1.400 4.800 0" stroke="#c08a66" stroke-width="1.100" fill="none"/><ellipse cx="16.5" cy="27.5" rx="4.400" ry="1.600" fill="#c8604c"/><path d="M12.1 27.4q4.400 .8 8.800 0" stroke="#c08a66" stroke-width="0.600" fill="none"/><ellipse cx="16.5" cy="30.7" rx="3.600" ry="1" fill="#c08a66" opacity="0.35"/></g></svg></div><div class="nm">Anne Martin<br>3</div></div>
<div class="c" style="left:127px"><b>01A</b><div class="t">08:40</div><div class="t">17:56</div></div>
<div class="c" style="left:175px"><b>01A</b><div class="t">08:41</div><div class="t">17:57</div></div>
<div class="c" style="left:223px"><b>01A</b><div class="t">08:42</div><div class="t">17:58</div></div>
<div class="c" style="left:271px"><b>01A</b><div class="t">08:43</div><div class="t">17:59</div></div>
<div class="c we" style="left:319px"><b>90A</b></div>
<div class="c we" style="left:367px"><b>90A</b></div>
<div class="c" style="left:415px"><b>01A</b><div class="ml"><i class="mk" style="background:#02fd02"></i>AH</div><div class="t">08:44</div><div class="t">18:00</div></div>
<div class="c" style="left:463px"><b>01A</b><div class="ml"><i class="mk" style="background:#02fd02"></i>AH</div><div class="t">08:45</div><div class="t">18:01</div></div>
<div class="c" style="left:511px"><b>01A</b><div class="t">08:46</div><div class="t">18:02</div></div>
<div class="c td" style="left:559px"><i class="ball"></i><b>01A</b><div class="t">08:47</div><i class="fl"></i></div>
<div class="c" style="left:607px"><b>01A</b></div>
<div class="c we" style="left:655px"><b>90A</b></div>
<div class="c we" style="left:703px"><b>90A</b></div>
<div class="c" style="left:751px"><b>01A</b></div>
<div class="c" style="left:799px"><b>01A</b></div>
<div class="c" style="left:847px"><b>01A</b></div>
<div class="c" style="left:895px"><b>01A</b></div>
<div class="c" style="left:943px"><b>01A</b></div>
<div class="c we" style="left:991px"><b>90A</b></div>
<div class="c we" style="left:1039px"><b>90A</b></div>
<div class="c" style="left:1087px"><b>01A</b></div>
<div class="c" style="left:1135px"><b>01A</b></div>
<div class="c" style="left:1183px"><b>01A</b></div>
<div class="c" style="left:1231px"><b>01A</b></div>
<div class="c" style="left:1279px"><b>01A</b></div>
<div class="c we" style="left:1327px"><b>90A</b></div>
<div class="c we" style="left:1375px"><b>90A</b></div>
<div class="c" style="left:1423px"><b>01A</b></div>
<div class="c" style="left:1471px"><b>01A</b><div class="ml"><i class="mk" style="background:#7e0202"></i>BT</div></div>
<div class="c" style="left:1519px"><b>01A</b><div class="ml"><i class="mk" style="background:#7e0202"></i>BT</div></div>
</div>
<div class="r" style="top:216px">
<div class="e"><div class="ph"><svg width="32" height="36" viewBox="0 0 32 36" style="display:block"><defs><filter id="fb3" x="-20%" y="-20%" width="140%" height="140%"><feGaussianBlur stdDeviation="1.0"/></filter><filter id="fb3s" x="-30%" y="-30%" width="160%" height="160%"><feGaussianBlur stdDeviation="0.7"/></filter><radialGradient id="sk3" cx="50%" cy="40%" r="65%"><stop offset="0" stop-color="#dab49a"/><stop offset="0.6" stop-color="#caa288"/><stop offset="1" stop-color="#a07860"/></radialGradient></defs><rect width="32" height="36" fill="#abaaa6"/><g filter="url(#fb3)"><path d="M1.6999999999999993 17C0.1999999999999993 5 10 -0.5 16 -0.5S31.8 5 30.3 17z" fill="#3a322e"/><ellipse cx="3.8999999999999995" cy="19.1" rx="1.700" ry="3.200" fill="#a07860"/><ellipse cx="28.1" cy="19.1" rx="1.700" ry="3.200" fill="#a07860"/><rect x="10" y="31" width="12" height="12" fill="#a07860"/><path d="M4.199999999999999 16.6C4.199999999999999 6.5 7.74 4.5 16 4.5S27.8 6.5 27.8 16.6C27.8 25.6 25.44 33 19 36Q16 37.2 13 36C6.559999999999999 33 4.199999999999999 25.6 4.199999999999999 16.6z" fill="url(#sk3)"/><path d="M3.1999999999999993 15C2.1999999999999993 4.5 10 0.5 16 0.5S29.8 4.5 28.8 15C27.8 9.5 23 7.5 16 7.5S4.199999999999999 9.5 3.1999999999999993 15z" fill="#3a322e"/><path d="M10 26.300q6-1.800 12 0l0 1.200q-6-1-12 0z" fill="#806050" opacity="0.75"/><path d="M-1 37V33L5 31 9 37zM33 37V32L28 30 23 37z" fill="#b0b0be"/></g><g filter="url(#fb3s)"><ellipse cx="10.336" cy="16.3" rx="3.500" ry="2.200" fill="#a07860" opacity="0.85"/><ellipse cx="21.664" cy="16.3" rx="3.500" ry="2.200" fill="#a07860" opacity="0.85"/><ellipse cx="10.336" cy="16.900000000000002" rx="2.200" ry="1" fill="#2a1c16" opacity="0.9"/><ellipse cx="21.664" cy="16.900000000000002" rx="2.200" ry="1" fill="#2a1c16" opacity="0.9"/><path d="M7.136 14.600000000000001q3.200-1.500 6.200-.2M18.664 14.400000000000002q3-1.300 6.200 .2" stroke="#3a2a20" stroke-width="1.100" fill="none" opacity="0.8"/><path d="M14.8 17.6L14.5 22.6h3L17.2 17.6z" fill="#dab49a" opacity="0.6"/><path d="M13.6 22.900000000000002q2.400 1.400 4.800 0" stroke="#a07860" stroke-width="1.100" fill="none"/><ellipse cx="16" cy="28" rx="4.400" ry="1.600" fill="#b88484"/><path d="M11.6 27.9q4.400 .8 8.800 0" stroke="#a07860" stroke-width="0.600" fill="none"/><ellipse cx="16" cy="31.2" rx="3.600" ry="1" fill="#a07860" opacity="0.35"/></g></svg></div><div class="nm">Bart Kyle<br>5</div></div>
<div class="c" style="left:127px"><b>01A</b><div class="t">08:17</div><div class="t">17:08</div></div>
<div class="c" style="left:175px"><b>01A</b><div class="t">08:18</div><div class="t">17:09</div></div>
<div class="c" style="left:223px"><b>01A</b><div class="t">08:19</div><div class="t">17:10</div></div>
<div class="c" style="left:271px"><b>01A</b><div class="t">08:20</div><div class="t">17:11</div></div>
<div class="c we" style="left:319px"><b>90A</b></div>
<div class="c we" style="left:367px"><b>90A</b></div>
<div class="c" style="left:415px"><b>01A</b><div class="ml"><i class="mk" style="background:#7e0202"></i>BT</div></div>
<div class="c" style="left:463px"><b>01A</b><div class="ml"><i class="mk" style="background:#7e0202"></i>BT</div></div>
<div class="c" style="left:511px"><b>01A</b><div class="ml"><i class="mk" style="background:#7e0202"></i>BT</div><div class="t">08:23</div><div class="t">18:14</div></div>
<div class="c td" style="left:559px"><i class="ball"></i><b>01A</b><div class="t">08:24</div><i class="fl"></i></div>
<div class="c" style="left:607px"><b>01A</b></div>
<div class="c we" style="left:655px"><b>90A</b></div>
<div class="c we" style="left:703px"><b>90A</b></div>
<div class="c" style="left:751px"><b>01A</b></div>
<div class="c" style="left:799px"><b>01A</b></div>
<div class="c" style="left:847px"><b>01A</b></div>
<div class="c" style="left:895px"><b>01A</b></div>
<div class="c" style="left:943px"><b>01A</b></div>
<div class="c we" style="left:991px"><b>90A</b></div>
<div class="c we" style="left:1039px"><b>90A</b></div>
<div class="c" style="left:1087px"><b>01A</b></div>
<div class="c" style="left:1135px"><b>01A</b></div>
<div class="c" style="left:1183px"><b>01A</b></div>
<div class="c" style="left:1231px"><b>01A</b></div>
<div class="c" style="left:1279px"><b>01A</b></div>
<div class="c we" style="left:1327px"><b>90A</b></div>
<div class="c we" style="left:1375px"><b>90A</b></div>
<div class="c" style="left:1423px"><b>01A</b></div>
<div class="c" style="left:1471px"><b>01A</b></div>
<div class="c" style="left:1519px"><b>01A</b></div>
</div>
<div class="r" style="top:288px">
<div class="e"><div class="ph"><svg width="32" height="36" viewBox="0 0 32 36" style="display:block"><defs><filter id="fb4" x="-20%" y="-20%" width="140%" height="140%"><feGaussianBlur stdDeviation="1.0"/></filter><filter id="fb4s" x="-30%" y="-30%" width="160%" height="160%"><feGaussianBlur stdDeviation="0.7"/></filter><radialGradient id="sk4" cx="50%" cy="40%" r="65%"><stop offset="0" stop-color="#e2b494"/><stop offset="0.6" stop-color="#cd9e7e"/><stop offset="1" stop-color="#a0745a"/></radialGradient></defs><rect width="32" height="36" fill="#78716b"/><g filter="url(#fb4)"><path d="M-1 37V29Q5 27 9 31L13 37zM33 37V28Q27 26 22 31L19 37z" fill="#3a3a3c"/><path d="M2.8000000000000007 16C1.3000000000000007 5 9.5 -0.5 15.5 -0.5S29.7 5 28.2 16z" fill="#3c2c20"/><ellipse cx="5.000000000000001" cy="18.7" rx="1.700" ry="3.200" fill="#a0745a"/><ellipse cx="26.0" cy="18.7" rx="1.700" ry="3.200" fill="#a0745a"/><rect x="9.5" y="28" width="12" height="12" fill="#a0745a"/><path d="M5.300000000000001 16.2C5.300000000000001 6.5 8.360000000000001 4.5 15.5 4.5S25.7 6.5 25.7 16.2C25.7 25.2 22.844 30 18.5 33Q15.5 34.2 12.5 33C8.156 30 5.300000000000001 25.2 5.300000000000001 16.2z" fill="url(#sk4)"/><path d="M4.300000000000001 14C3.3000000000000007 4.5 9.5 0.5 15.5 0.5S27.7 4.5 26.7 14C25.7 10 22.5 8 15.5 8S5.300000000000001 10 4.300000000000001 14z" fill="#3c2c20"/><path d="M5 10Q4 2 12 1 22 -1 27 5 29 9 26 13 24 8 20 7 12 6 8 9z" fill="#3c2c20"/><path d="M8.500 27Q15.500 35 22.500 27L21 31Q15.500 35 10 31z" fill="#8a6450" opacity="0.6"/></g><g filter="url(#fb4s)"><ellipse cx="10.604" cy="15.899999999999999" rx="3.500" ry="2.200" fill="#a0745a" opacity="0.85"/><ellipse cx="20.396" cy="15.899999999999999" rx="3.500" ry="2.200" fill="#a0745a" opacity="0.85"/><ellipse cx="10.604" cy="16.5" rx="2.200" ry="1" fill="#2a1c16" opacity="0.9"/><ellipse cx="20.396" cy="16.5" rx="2.200" ry="1" fill="#2a1c16" opacity="0.9"/><path d="M7.403999999999999 14.2q3.200-1.500 6.200-.2M17.396 14.0q3-1.300 6.200 .2" stroke="#3a2a20" stroke-width="1.100" fill="none" opacity="0.8"/><path d="M14.3 17.2L14.0 22.2h3L16.7 17.2z" fill="#e2b494" opacity="0.6"/><path d="M13.1 22.5q2.400 1.400 4.800 0" stroke="#a0745a" stroke-width="1.100" fill="none"/><ellipse cx="15.5" cy="25.6" rx="4.400" ry="1.600" fill="#b8665c"/><path d="M11.1 25.5q4.400 .8 8.800 0" stroke="#a0745a" stroke-width="0.600" fill="none"/><ellipse cx="15.5" cy="28.8" rx="3.600" ry="1" fill="#a0745a" opacity="0.35"/></g></svg></div><div class="nm">Bruno Johns<br>1</div></div>
<div class="c" style="left:127px"><b>01A</b><div class="ml"><i class="mk" style="background:#7e0202"></i>BT</div></div>
<div class="c" style="left:175px"><b>01A</b><div class="ml"><i class="mk" style="background:#7e0202"></i>BT</div></div>
<div class="c" style="left:223px"><b>01A</b><div class="ml"><i class="mk" style="background:#02fd02"></i>AH</div></div>
<div class="c" style="left:271px"><b>01A</b><div class="ml"><i class="mk" style="background:#7e0202"></i>BT</div><div class="t"><u>08:30</u></div><div class="t" style="font-weight:bold;letter-spacing:.75px"><u>10:23</u></div><i class="fl"></i></div>
<div class="c we" style="left:319px"><b>90A</b></div>
<div class="c we" style="left:367px"><b>90A</b></div>
<div class="c" style="left:415px"><b>01A</b><div class="ml"><i class="mk" style="background:#ff08f0"></i>AT</div></div>
<div class="c" style="left:463px"><b>01A</b><div class="ml"><i class="mk" style="background:#ff08f0"></i>AT</div></div>
<div class="c" style="left:511px"><b>01A</b><div class="t">08:36</div><div class="t">17:30</div></div>
<div class="c td" style="left:559px"><i class="ball"></i><b>01A</b><div class="t">08:37</div><i class="fl"></i></div>
<div class="c" style="left:607px"><b>01A</b></div>
<div class="c we" style="left:655px"><b>90A</b></div>
<div class="c we" style="left:703px"><b>90A</b></div>
<div class="c" style="left:751px"><b>01A</b></div>
<div class="c" style="left:799px"><b>01A</b></div>
<div class="c" style="left:847px"><b>01A</b></div>
<div class="c" style="left:895px"><b>01A</b></div>
<div class="c" style="left:943px"><b>01A</b></div>
<div class="c we" style="left:991px"><b>90A</b></div>
<div class="c we" style="left:1039px"><b>90A</b></div>
<div class="c" style="left:1087px"><b>01A</b></div>
<div class="c" style="left:1135px"><b>01A</b><div class="ml"><i class="mk" style="background:#02fd02"></i>AH</div></div>
<div class="c" style="left:1183px"><b>01A</b><div class="ml"><i class="mk" style="background:#02fd02"></i>AH</div></div>
<div class="c" style="left:1231px"><b>01A</b></div>
<div class="c" style="left:1279px"><b>01A</b></div>
<div class="c we" style="left:1327px"><b>90A</b></div>
<div class="c we" style="left:1375px"><b>90A</b></div>
<div class="c" style="left:1423px"><b>01A</b></div>
<div class="c" style="left:1471px"><b>01A</b></div>
<div class="c" style="left:1519px"><b>01A</b></div>
</div>
<div class="r" style="top:360px">
<div class="e"><div class="ph"><svg width="32" height="36" viewBox="0 0 32 36" style="display:block"><defs><filter id="fb5" x="-20%" y="-20%" width="140%" height="140%"><feGaussianBlur stdDeviation="1.0"/></filter><filter id="fb5s" x="-30%" y="-30%" width="160%" height="160%"><feGaussianBlur stdDeviation="0.7"/></filter><radialGradient id="sk5" cx="50%" cy="40%" r="65%"><stop offset="0" stop-color="#f8dac2"/><stop offset="0.6" stop-color="#ecc4a6"/><stop offset="1" stop-color="#c49472"/></radialGradient></defs><rect width="32" height="36" fill="#c4965a"/><g filter="url(#fb5)"><path d="M-3 40V12C-2 2 6 -4 16 -4S34 2 35 12V40z" fill="#cca064"/><rect x="10" y="33" width="12" height="12" fill="#c49472"/><path d="M3.1999999999999993 16C3.1999999999999993 4 7.040000000000001 2 16 2S28.8 4 28.8 16C28.8 25 26.880000000000003 35 19 38Q16 39.2 13 38C5.119999999999999 35 3.1999999999999993 25 3.1999999999999993 16z" fill="url(#sk5)"/><path d="M1.6999999999999993 12C1.1999999999999993 3 10 -1 16 -1S30.8 3 30.3 12C28.8 6 22 3 16 2.5S3.1999999999999993 6 1.6999999999999993 12z" fill="#cca064"/><path d="M15 -1Q27 2 33 20V-1z" fill="#c89c60"/><path d="M23 3Q30.500 10 31 24Q27 12 20 5z" fill="#ecd4a8"/><path d="M27 14Q31 20 30 30L33 30V10z" fill="#b08448"/><path d="M-1 6Q1 20 4.500 31L-1 37z" fill="#dcb680"/><path d="M3 4Q1 10 2.500 18" stroke="#a87c48" stroke-width="1.200" fill="none"/><ellipse cx="1" cy="34" rx="3" ry="3" fill="#fcf8f2"/></g><g filter="url(#fb5s)"><ellipse cx="9.856" cy="15.7" rx="3.500" ry="2.200" fill="#c49472" opacity="0.85"/><ellipse cx="22.144" cy="15.7" rx="3.500" ry="2.200" fill="#c49472" opacity="0.85"/><ellipse cx="9.856" cy="16.3" rx="2.200" ry="1" fill="#3c4250" opacity="0.9"/><ellipse cx="22.144" cy="16.3" rx="2.200" ry="1" fill="#3c4250" opacity="0.9"/><path d="M6.656 14q3.200-1.500 6.200-.2M19.144 13.8q3-1.300 6.200 .2" stroke="#8a6644" stroke-width="1.100" fill="none" opacity="0.8"/><path d="M14.8 17L14.5 22h3L17.2 17z" fill="#f8dac2" opacity="0.6"/><path d="M13.6 22.3q2.400 1.400 4.800 0" stroke="#c49472" stroke-width="1.100" fill="none"/><ellipse cx="16" cy="28.4" rx="4.400" ry="1.600" fill="#d08c84"/><path d="M11.6 28.299999999999997q4.400 .8 8.800 0" stroke="#c49472" stroke-width="0.600" fill="none"/><ellipse cx="16" cy="31.599999999999998" rx="3.600" ry="1" fill="#c49472" opacity="0.35"/></g></svg></div><div class="nm">Constanza Richard<br>16</div></div>
<div class="c" style="left:127px"><b>01A</b><div class="t">08:40</div><div class="t">17:56</div></div>
<div class="c" style="left:175px"><b>01A</b><div class="t">08:41</div><div class="t">17:57</div></div>
<div class="c" style="left:223px"><b>01A</b><div class="t">08:42</div><div class="t">17:58</div></div>
<div class="c" style="left:271px"><b>01A</b><div class="t">08:43</div><div class="t">17:59</div></div>
<div class="c we" style="left:319px"><b>90A</b></div>
<div class="c we" style="left:367px"><b>90A</b></div>
<div class="c" style="left:415px"><b>01A</b><div class="t">08:44</div><div class="t">18:00</div></div>
<div class="c" style="left:463px"><b>01A</b><div class="t">08:45</div><div class="t">18:01</div></div>
<div class="c" style="left:511px"><b>01A</b><div class="t">08:46</div><div class="t">18:02</div></div>
<div class="c td" style="left:559px"><i class="ball"></i><b>01A</b><div class="t">08:47</div><i class="fl"></i></div>
<div class="c" style="left:607px"><b>01A</b></div>
<div class="c we" style="left:655px"><b>90A</b></div>
<div class="c we" style="left:703px"><b>90A</b></div>
<div class="c" style="left:751px"><b>01A</b></div>
<div class="c" style="left:799px"><b>01A</b></div>
<div class="c" style="left:847px"><b>01A</b></div>
<div class="c" style="left:895px"><b>01A</b></div>
<div class="c" style="left:943px"><b>01A</b></div>
<div class="c we" style="left:991px"><b>90A</b></div>
<div class="c we" style="left:1039px"><b>90A</b></div>
<div class="c" style="left:1087px"><b>01A</b></div>
<div class="c" style="left:1135px"><b>01A</b></div>
<div class="c" style="left:1183px"><b>01A</b></div>
<div class="c" style="left:1231px"><b>01A</b></div>
<div class="c" style="left:1279px"><b>01A</b></div>
<div class="c we" style="left:1327px"><b>90A</b></div>
<div class="c we" style="left:1375px"><b>90A</b></div>
<div class="c" style="left:1423px"><b>01A</b></div>
<div class="c" style="left:1471px"><b>01A</b></div>
<div class="c" style="left:1519px"><b>01A</b></div>
</div>
<div class="r" style="top:432px">
<div class="e"><div class="ph"><svg width="32" height="36" viewBox="0 0 32 36" style="display:block"><defs><filter id="fb6" x="-20%" y="-20%" width="140%" height="140%"><feGaussianBlur stdDeviation="1.0"/></filter><filter id="fb6s" x="-30%" y="-30%" width="160%" height="160%"><feGaussianBlur stdDeviation="0.7"/></filter><radialGradient id="sk6" cx="50%" cy="40%" r="65%"><stop offset="0" stop-color="#a87252"/><stop offset="0.6" stop-color="#8c583c"/><stop offset="1" stop-color="#583422"/></radialGradient></defs><rect width="32" height="36" fill="#d8caa6"/><g filter="url(#fb6)"><path d="M9 20H23L25 37H8z" fill="#643c26"/><path d="M10 28L16 32 24 26 31 30V37H10z" fill="#b6b6ae"/><path d="M-1 37V19Q5 15 9 18L11 27 12 37zM33 37V15Q27 13 24 17L26 27 31 37z" fill="#1a1818"/><path d="M4.1 11C2.5999999999999996 5 10 -2.5 16 -2.5S29.4 5 27.9 11z" fill="#1e1a18"/><ellipse cx="6.3" cy="14.0" rx="1.700" ry="3.200" fill="#583422"/><ellipse cx="25.7" cy="14.0" rx="1.700" ry="3.200" fill="#583422"/><rect x="10" y="22" width="12" height="12" fill="#583422"/><path d="M6.6 11.5C6.6 4.5 9.42 2.5 16 2.5S25.4 4.5 25.4 11.5C25.4 20.5 23.05 24 19 27Q16 28.2 13 27C8.95 24 6.6 20.5 6.6 11.5z" fill="url(#sk6)"/><path d="M5.6 9C4.6 2.5 10 -1.5 16 -1.5S27.4 2.5 26.4 9C25.4 7 23 5 16 5S6.6 7 5.6 9z" fill="#1e1a18"/></g><g filter="url(#fb6s)"><ellipse cx="11.488" cy="11.2" rx="3.500" ry="2.200" fill="#583422" opacity="0.85"/><ellipse cx="20.512" cy="11.2" rx="3.500" ry="2.200" fill="#583422" opacity="0.85"/><ellipse cx="11.488" cy="11.8" rx="2.200" ry="1" fill="#140c08" opacity="0.9"/><ellipse cx="20.512" cy="11.8" rx="2.200" ry="1" fill="#140c08" opacity="0.9"/><path d="M8.288 9.5q3.200-1.500 6.200-.2M17.512 9.3q3-1.300 6.200 .2" stroke="#1c1410" stroke-width="1.100" fill="none" opacity="0.8"/><path d="M14.8 12.5L14.5 17.5h3L17.2 12.5z" fill="#a87252" opacity="0.6"/><path d="M13.6 17.8q2.400 1.400 4.800 0" stroke="#583422" stroke-width="1.100" fill="none"/><ellipse cx="16" cy="20.2" rx="4.400" ry="1.600" fill="#a05654"/><path d="M11.6 20.099999999999998q4.400 .8 8.800 0" stroke="#583422" stroke-width="0.600" fill="none"/><ellipse cx="16" cy="23.4" rx="3.600" ry="1" fill="#583422" opacity="0.35"/></g></svg></div><div class="nm">David Triggs<br>6</div></div>
<div class="c" style="left:127px"><b>01A</b><div class="t">08:14</div><div class="t">17:54</div></div>
<div class="c" style="left:175px"><b>01A</b><div class="t">08:15</div><div class="t">17:55</div></div>
<div class="c" style="left:223px"><b>01A</b><div class="t">08:16</div><div class="t">17:56</div></div>
<div class="c" style="left:271px"><b>01A</b><div class="t">08:17</div><div class="t">17:57</div></div>
<div class="c we" style="left:319px"><b>90A</b></div>
<div class="c we" style="left:367px"><b>90A</b></div>
<div class="c" style="left:415px"><b>01A</b><div class="t">08:18</div><div class="t">17:58</div></div>
<div class="c" style="left:463px"><b>01A</b><div class="t">08:19</div><div class="t">17:59</div></div>
<div class="c" style="left:511px"><b>01A</b><div class="t">08:20</div><div class="t">18:06</div></div>
<div class="c td" style="left:559px"><i class="ball"></i><b>01A</b><div class="t">08:21</div><i class="fl"></i></div>
<div class="c" style="left:607px"><b>01A</b></div>
<div class="c we" style="left:655px"><b>90A</b></div>
<div class="c we" style="left:703px"><b>90A</b></div>
<div class="c" style="left:751px"><b>01A</b></div>
<div class="c" style="left:799px"><b>01A</b></div>
<div class="c" style="left:847px"><b>01A</b></div>
<div class="c" style="left:895px"><b>01A</b></div>
<div class="c" style="left:943px"><b>01A</b></div>
<div class="c we" style="left:991px"><b>90A</b></div>
<div class="c we" style="left:1039px"><b>90A</b></div>
<div class="c" style="left:1087px"><b>01A</b></div>
<div class="c" style="left:1135px"><b>01A</b></div>
<div class="c" style="left:1183px"><b>01A</b></div>
<div class="c" style="left:1231px"><b>01A</b></div>
<div class="c" style="left:1279px"><b>01A</b></div>
<div class="c we" style="left:1327px"><b>90A</b></div>
<div class="c we" style="left:1375px"><b>90A</b></div>
<div class="c" style="left:1423px"><b>01A</b></div>
<div class="c" style="left:1471px"><b>01A</b></div>
<div class="c" style="left:1519px"><b>01A</b></div>
</div>
<div class="r" style="top:504px">
<div class="e"><div class="ph"><svg width="32" height="36" viewBox="0 0 32 36" style="display:block"><defs><filter id="fb7" x="-20%" y="-20%" width="140%" height="140%"><feGaussianBlur stdDeviation="1.0"/></filter><filter id="fb7s" x="-30%" y="-30%" width="160%" height="160%"><feGaussianBlur stdDeviation="0.7"/></filter><radialGradient id="sk7" cx="50%" cy="40%" r="65%"><stop offset="0" stop-color="#e4b898"/><stop offset="0.6" stop-color="#cd9e7e"/><stop offset="1" stop-color="#a0745a"/></radialGradient></defs><rect width="32" height="36" fill="#6e6856"/><g filter="url(#fb7)"><path d="M-3 40V12C-2 2 6 0.5 16 0.5S34 2 35 12V40z" fill="#584e40"/><rect x="10" y="32" width="12" height="12" fill="#a0745a"/><path d="M5.199999999999999 17.4C5.199999999999999 8.5 8.440000000000001 6.5 16 6.5S26.8 8.5 26.8 17.4C26.8 26.4 24.64 34 19 37Q16 38.2 13 37C7.359999999999999 34 5.199999999999999 26.4 5.199999999999999 17.4z" fill="url(#sk7)"/><path d="M3.6999999999999993 18C3.1999999999999993 7.5 10 3.5 16 3.5S28.8 7.5 28.3 18C26.8 12 22 9 16 8.5S5.199999999999999 12 3.6999999999999993 18z" fill="#584e40"/><path d="M-1 37V26Q3 30 6 37zM33 37V26Q29 30 26 37z" fill="#7c766a"/></g><g filter="url(#fb7s)"><ellipse cx="10.815999999999999" cy="17.099999999999998" rx="3.500" ry="2.200" fill="#a0745a" opacity="0.85"/><ellipse cx="21.184" cy="17.099999999999998" rx="3.500" ry="2.200" fill="#a0745a" opacity="0.85"/><ellipse cx="10.815999999999999" cy="17.7" rx="2.200" ry="1" fill="#2a1c16" opacity="0.9"/><ellipse cx="21.184" cy="17.7" rx="2.200" ry="1" fill="#2a1c16" opacity="0.9"/><path d="M7.615999999999999 15.399999999999999q3.200-1.500 6.200-.2M18.184 15.2q3-1.300 6.200 .2" stroke="#3a2a20" stroke-width="1.100" fill="none" opacity="0.8"/><path d="M14.8 18.4L14.5 23.4h3L17.2 18.4z" fill="#e4b898" opacity="0.6"/><path d="M13.6 23.7q2.400 1.400 4.800 0" stroke="#a0745a" stroke-width="1.100" fill="none"/><ellipse cx="16" cy="28.2" rx="4.400" ry="1.600" fill="#c08078"/><path d="M11.6 28.099999999999998q4.400 .8 8.800 0" stroke="#a0745a" stroke-width="0.600" fill="none"/><ellipse cx="16" cy="31.4" rx="3.600" ry="1" fill="#a0745a" opacity="0.35"/></g></svg></div><div class="nm">Els Peeters<br>2</div></div>
<div class="c" style="left:127px"><b>01A</b><div class="t">08:45</div><div class="t">12:32</div><i class="fl"></i></div>
<div class="c" style="left:175px"><b>01A</b><div class="t">08:46</div><div class="t">17:40</div></div>
<div class="c" style="left:223px"><b>01A</b><div class="t">08:47</div><div class="t">17:41</div></div>
<div class="c" style="left:271px"><b>01A</b><div class="t">08:48</div><div class="t">17:42</div></div>
<div class="c we" style="left:319px"><b>90A</b></div>
<div class="c we" style="left:367px"><b>90A</b></div>
<div class="c" style="left:415px"><b>01A</b><div class="t">08:49</div><div class="t">17:43</div></div>
<div class="c" style="left:463px"><b>01A</b><div class="t">08:50</div><div class="t">17:44</div></div>
<div class="c" style="left:511px"><b>01A</b><div class="t">08:51</div><div class="t">17:45</div></div>
<div class="c td" style="left:559px"><i class="ball"></i><b>01A</b><div class="t">08:52</div><i class="fl"></i></div>
<div class="c" style="left:607px"><b>01A</b></div>
<div class="c we" style="left:655px"><b>90A</b></div>
<div class="c we" style="left:703px"><b>90A</b></div>
<div class="c" style="left:751px"><b>01A</b></div>
<div class="c" style="left:799px"><b>01A</b></div>
<div class="c" style="left:847px"><b>01A</b></div>
<div class="c" style="left:895px"><b>01A</b></div>
<div class="c" style="left:943px"><b>01A</b></div>
<div class="c we" style="left:991px"><b>90A</b></div>
<div class="c we" style="left:1039px"><b>90A</b></div>
<div class="c" style="left:1087px"><b>01A</b></div>
<div class="c" style="left:1135px"><b>01A</b></div>
<div class="c" style="left:1183px"><b>01A</b></div>
<div class="c" style="left:1231px"><b>01A</b></div>
<div class="c" style="left:1279px"><b>01A</b></div>
<div class="c we" style="left:1327px"><b>90A</b></div>
<div class="c we" style="left:1375px"><b>90A</b></div>
<div class="c" style="left:1423px"><b>01A</b></div>
<div class="c" style="left:1471px"><b>01A</b></div>
<div class="c" style="left:1519px"><b>01A</b></div>
</div>
<div class="r" style="top:576px">
<div class="e"><div class="ph"><svg width="32" height="36" viewBox="0 0 32 36" style="display:block"><defs><filter id="fb8" x="-20%" y="-20%" width="140%" height="140%"><feGaussianBlur stdDeviation="1.0"/></filter><filter id="fb8s" x="-30%" y="-30%" width="160%" height="160%"><feGaussianBlur stdDeviation="0.7"/></filter><radialGradient id="sk8" cx="50%" cy="40%" r="65%"><stop offset="0" stop-color="#deae96"/><stop offset="0.6" stop-color="#cc9a82"/><stop offset="1" stop-color="#a07060"/></radialGradient></defs><rect width="32" height="36" fill="#a4a09a"/><g filter="url(#fb8)"><path d="M2.0999999999999996 17C0.5999999999999996 5 10 0 16 0S31.4 5 29.9 17z" fill="#3c342e"/><ellipse cx="4.3" cy="19.1" rx="1.700" ry="3.200" fill="#a07060"/><ellipse cx="27.7" cy="19.1" rx="1.700" ry="3.200" fill="#a07060"/><rect x="10" y="31" width="12" height="12" fill="#a07060"/><path d="M4.6 16.6C4.6 7 8.02 5 16 5S27.4 7 27.4 16.6C27.4 25.6 24.892000000000003 33 19 36Q16 37.2 13 36C7.107999999999999 33 4.6 25.6 4.6 16.6z" fill="url(#sk8)"/><path d="M3.5999999999999996 15C2.5999999999999996 5 10 1 16 1S29.4 5 28.4 15C27.4 10 23 8 16 8S4.6 10 3.5999999999999996 15z" fill="#3c342e"/><path d="M-1 37V34L5 32 9 37zM33 37V34L28 32 23 37z" fill="#8c8c9a"/></g><g filter="url(#fb8s)"><ellipse cx="10.528" cy="16.3" rx="3.500" ry="2.200" fill="#a07060" opacity="0.85"/><ellipse cx="21.472" cy="16.3" rx="3.500" ry="2.200" fill="#a07060" opacity="0.85"/><ellipse cx="10.528" cy="16.900000000000002" rx="2.200" ry="1" fill="#2a1c16" opacity="0.9"/><ellipse cx="21.472" cy="16.900000000000002" rx="2.200" ry="1" fill="#2a1c16" opacity="0.9"/><path d="M7.328 14.600000000000001q3.200-1.500 6.200-.2M18.472 14.400000000000002q3-1.300 6.200 .2" stroke="#3a2a20" stroke-width="1.100" fill="none" opacity="0.8"/><path d="M14.8 17.6L14.5 22.6h3L17.2 17.6z" fill="#deae96" opacity="0.6"/><path d="M13.6 22.900000000000002q2.400 1.400 4.800 0" stroke="#a07060" stroke-width="1.100" fill="none"/><ellipse cx="16" cy="27.2" rx="4.400" ry="1.600" fill="#c08080"/><path d="M11.6 27.099999999999998q4.400 .8 8.800 0" stroke="#a07060" stroke-width="0.600" fill="none"/><ellipse cx="16" cy="30.4" rx="3.600" ry="1" fill="#a07060" opacity="0.35"/></g></svg></div><div class="nm">Frank Henry<br>4</div></div>
<div class="c" style="left:127px"><b>01A</b><div class="t">08:14</div><div class="t">17:54</div></div>
<div class="c" style="left:175px"><b>01A</b><div class="t">08:15</div><div class="t">17:55</div></div>
<div class="c" style="left:223px"><b>01A</b><div class="t">08:16</div><div class="t">17:56</div></div>
<div class="c" style="left:271px"><b>01A</b><div class="t">08:17</div><div class="t">17:57</div></div>
<div class="c we" style="left:319px"><b>90A</b></div>
<div class="c we" style="left:367px"><b>90A</b></div>
<div class="c" style="left:415px"><b>01A</b><div class="t">08:18</div><div class="t">17:58</div></div>
<div class="c" style="left:463px"><b>01A</b><div class="t">08:19</div><div class="t">17:59</div></div>
<div class="c" style="left:511px"><b>01A</b><div class="t">08:20</div><div class="t">18:06</div></div>
<div class="c td" style="left:559px"><i class="ball"></i><b>01A</b><div class="t">08:21</div><i class="fl"></i></div>
<div class="c" style="left:607px"><b>01A</b></div>
<div class="c we" style="left:655px"><b>90A</b></div>
<div class="c we" style="left:703px"><b>90A</b></div>
<div class="c" style="left:751px"><b>01A</b></div>
<div class="c" style="left:799px"><b>01A</b><div class="ml"><i class="mk" style="background:#3264fa"></i>BTA</div></div>
<div class="c" style="left:847px"><b>01A</b><div class="ml"><i class="mk" style="background:#3264fa"></i>BTA</div></div>
<div class="c" style="left:895px"><b>01A</b></div>
<div class="c" style="left:943px"><b>01A</b></div>
<div class="c we" style="left:991px"><b>90A</b></div>
<div class="c we" style="left:1039px"><b>90A</b></div>
<div class="c" style="left:1087px"><b>01A</b></div>
<div class="c" style="left:1135px"><b>01A</b></div>
<div class="c" style="left:1183px"><b>01A</b></div>
<div class="c" style="left:1231px"><b>01A</b></div>
<div class="c" style="left:1279px"><b>01A</b></div>
<div class="c we" style="left:1327px"><b>90A</b></div>
<div class="c we" style="left:1375px"><b>90A</b></div>
<div class="c" style="left:1423px"><b>01A</b><div class="ml"><i class="mk" style="background:#02fd02"></i>AH</div></div>
<div class="c" style="left:1471px"><b>01A</b><div class="ml"><i class="mk" style="background:#02fd02"></i>AH</div></div>
<div class="c" style="left:1519px"><b>01A</b><div class="ml"><i class="mk" style="background:#02fd02"></i>AH</div></div>
</div>
</div>
<div id="sb" class="a"><div class="a" style="left:5px;top:7px"><svg width="7" height="4" viewBox="0 0 7 4"><path d="M0 4L3.500 0L7 4z" fill="#a3a3a3"/></svg></div><div class="a th"></div><div class="a" style="left:5px;top:642px"><svg width="7" height="4" viewBox="0 0 7 4"><path d="M0 0L3.500 4L7 0z" fill="#505050"/></svg></div></div>
<div id="pt" class="a"></div>
<div class="a" style="left:14px;top:725px;"><svg width="11" height="12" viewBox="0 0 11 12" ><rect x="0.4" y="0.4" width="2.4" height="11.2" fill="url(#ggray)" stroke="#b4b6bc" stroke-width="0.5"/><path d="M10.4 0.6v10.8L4.2 6z" fill="url(#ggray)"/></svg></div>
<div class="a" style="left:39px;top:725px;"><svg width="7" height="12" viewBox="0 0 7 12" ><path d="M6.6 0.6v10.8L0.4 6z" fill="url(#ggray)"/></svg></div>
<div class="a sep" style="left:58px;top:724px;"></div>
<div class="a lbl" style="left:67px;top:723px;color:#333;letter-spacing:-.4px">Page</div>
<div class="a fld" style="left:99px;top:721px;width:30px;height:20px">1</div>
<div class="a lbl" style="left:137px;top:723px;color:#333">of 2</div>
<div class="a sep" style="left:164px;top:724px;"></div>
<div class="a" style="left:176px;top:725px;"><svg width="7" height="12" viewBox="0 0 7 12" ><path d="M0.4 0.6v10.8L6.6 6z" fill="url(#gblue)"/></svg></div>
<div class="a" style="left:199px;top:725px;"><svg width="11" height="12" viewBox="0 0 11 12" ><path d="M0.4 0.6v10.8L6.6 6z" fill="url(#gblue)"/><rect x="7.6" y="0.4" width="2.4" height="11.2" fill="url(#gblue)" stroke="#2a50c8" stroke-width="0.5"/></svg></div>
<div class="a sep" style="left:219px;top:724px;"></div>
<div class="a" style="left:227px;top:723px;"><svg width="15" height="15" viewBox="0 0 15 15" ><path d="M1.400 7A5.600 5.600 0 0 1 11 3" stroke="#4c9cf4" stroke-width="2" fill="none"/><path d="M8.400 0.200l6.200 1.200-3 5.400z" fill="#3c8cec"/><path d="M13.600 8A5.600 5.600 0 0 1 4 12" stroke="#3484e8" stroke-width="2" fill="none"/><path d="M6.600 14.800L0.400 13.600l3-5.400z" fill="#3c8cec"/></svg></div>
<div class="a sep" style="left:250px;top:724px;"></div>
<div class="a sep" style="left:275px;top:724px;"></div>
<div class="a lbl" style="left:280px;top:723px;font-weight:bold;color:#111;letter-spacing:.3px">No calculation in progress</div>
<div class="a lbl" style="left:1405px;top:723px;width:200px;text-align:right;color:#333;letter-spacing:.06px">Displaying employee(s) 1 - 10 of 16</div>
<div id="menu" class="a"><div class="a vl"></div>
<div class="mi" style="top:2px"><div class="ic"><svg width="16" height="16" viewBox="0 0 16 16" ><circle cx="8" cy="8" r="7.400" fill="#f4f4f2" stroke="#c4c8cc" stroke-width="0.800"/><circle cx="8" cy="8" r="5.800" fill="#dcecf8" stroke="#b4c4d4" stroke-width="0.700"/><circle cx="8" cy="7.400" r="4.600" fill="#eef6fc"/><path d="M5.400 6.800L8 8.400L11.200 6.600" stroke="#2c2c2c" stroke-width="1.100" fill="none"/><path d="M8 2.800v1M8 12.200v1M2.800 8h1M12.200 8h1" stroke="#7c8c9c" stroke-width="0.700"/></svg></div><div class="tx">Add booking</div></div>
<div class="mi" style="top:28px"><div class="ic"><svg width="16" height="16" viewBox="0 0 16 16" ><path d="M6.800 13.600C6.600 9.600 8 7.600 11.200 7.600S15.800 9.600 15.600 13.600z" fill="#ec1c1c"/><path d="M9.800 7.800l1.400 2 1.400-2z" fill="#f8d8c0"/><ellipse cx="11.200" cy="3.400" rx="2.900" ry="3" fill="#141010"/><ellipse cx="11.200" cy="4.900" rx="1.900" ry="2.100" fill="#f0c4a0"/><path d="M8.600 3.800Q11.200 1.600 13.800 3.800L13.600 2Q11.200 0 8.800 2z" fill="#141010"/><circle cx="4.900" cy="11" r="4.300" fill="#f4f4f4" stroke="#3c3c3c" stroke-width="1"/><circle cx="4.900" cy="11" r="3" fill="#ec2020"/><path d="M2.900 9.900l4 2.200" stroke="#fff" stroke-width="1.400"/></svg></div><div class="tx">Add absence</div></div>
<div class="mi" style="top:54px"><div class="ic"><svg width="16" height="16" viewBox="0 0 16 16" ><path d="M6.800 13.600C6.600 9.600 8 7.600 11.200 7.600S15.800 9.600 15.600 13.600z" fill="#ec1c1c"/><path d="M9.800 7.800l1.400 2 1.400-2z" fill="#f8d8c0"/><ellipse cx="11.200" cy="3.400" rx="2.900" ry="3" fill="#141010"/><ellipse cx="11.200" cy="4.900" rx="1.900" ry="2.100" fill="#f0c4a0"/><path d="M8.600 3.800Q11.200 1.600 13.800 3.800L13.600 2Q11.200 0 8.800 2z" fill="#141010"/><circle cx="4.900" cy="11" r="4.300" fill="#f4f4f4" stroke="#3c3c3c" stroke-width="1"/><circle cx="4.900" cy="11" r="3" fill="#ec2020"/><path d="M2.900 9.900l4 2.200" stroke="#fff" stroke-width="1.400"/></svg></div><div class="tx">Absence operations</div><div class="ar"><svg width="5" height="8" viewBox="0 0 5 8" ><path d="M0.5 0.5v7L4.500 4z" fill="#6aa2ee" stroke="#3a6cc0" stroke-width="0.7"/></svg></div></div>
<div class="mi" style="top:80px"><div class="ic"><svg width="16" height="16" viewBox="0 0 16 16" ><rect x="2.600" y="0.800" width="12" height="13" fill="#dfe4ea" stroke="#b8a080" stroke-width="1"/><path d="M4.400 3.400h8.400M4.400 5.400h8.400M4.400 7.400h8.400M4.400 9.400h8.400" stroke="#98a4b4" stroke-width="0.900" stroke-dasharray="2.200 0.600"/><rect x="2" y="12.600" width="13.200" height="2.600" fill="#d0a06c"/><path d="M4.600 8l1.400 2.700 3 .4-2.200 2.100.6 3-2.800-1.500-2.700 1.500.5-3L.2 11.100l3-.4z" fill="#fcd820" stroke="#d0a010" stroke-width="0.500"/></svg></div><div class="tx">Counters corrections</div><div class="ar"><svg width="5" height="8" viewBox="0 0 5 8" ><path d="M0.5 0.5v7L4.500 4z" fill="#6aa2ee" stroke="#3a6cc0" stroke-width="0.7"/></svg></div></div>
<div class="mi" style="top:106px"><div class="ic"><svg width="16" height="16" viewBox="0 0 16 16" ><path d="M4.200 11l-.2 4.600L8.600 12.400z" fill="#2c9c14"/><ellipse cx="8" cy="6.800" rx="7.700" ry="6.400" fill="url(#ggreen2)"/><ellipse cx="8" cy="3.600" rx="5.400" ry="2.600" fill="#c8f8a0" opacity="0.450"/><rect x="7" y="2.600" width="2.100" height="5.400" rx="0.900" fill="#fff"/><circle cx="8.050" cy="10" r="1.200" fill="#fff"/></svg></div><div class="tx">Send message</div></div>
<div class="mi" style="top:132px"><div class="ic"><svg width="16" height="16" viewBox="0 0 16 16" ><path d="M2.600 5L4 14.600 9 13.800z" fill="#f4f8fc" stroke="#9cb4d8" stroke-width="0.500"/><path d="M3.400 3.800L12.800 2.400l1.800 9.200L5 13.400z" fill="url(#gnote)" stroke="#2c6cd0" stroke-width="0.500"/><path d="M3.400 3.800L12.800 2.400l.3 1.700L3.700 5.500z" fill="#e8f0fc"/><path d="M4.600 2.200l.4 2.600M6.400 1.900l.4 2.600M8.200 1.600l.4 2.600M10 1.400l.4 2.600M11.800 1.200l.4 2.600" stroke="#1c2440" stroke-width="0.900"/></svg></div><div class="tx">Add note</div></div>
<div class="mi" style="top:158px"><div class="ic"><svg width="16" height="16" viewBox="0 0 16 16" ><rect x="1.400" y="3.400" width="12.400" height="10" fill="#d2d2d2" stroke="#7c7c7c" stroke-width="0.800"/><path d="M4.400 5.400v8M7.400 5.400v8M10.400 5.400v8M1.400 8.400h12.400M1.400 11h12.400" stroke="#f8f8f8" stroke-width="0.800"/><path d="M1.600 1.400h10.800v-1.200l3.400 2.400-3.400 2.400V3.800H1.600z" fill="#5cc42c" stroke="#3c9c1c" stroke-width="0.400"/><circle cx="12" cy="12" r="3.900" fill="#2cac2c" stroke="#1c7c1c" stroke-width="0.800"/><circle cx="12" cy="12" r="1.900" fill="#ecffe4"/></svg></div><div class="tx">Scheduler</div></div>
<div class="mi" style="top:184px"><div class="ic"><svg width="16" height="16" viewBox="0 0 16 16" ><rect x="3" y="1.600" width="12.400" height="13" fill="#c8cccc" stroke="#a4a8a8" stroke-width="0.600"/><rect x="3" y="1.600" width="12.400" height="2.600" fill="#3c94dc"/><rect x="3" y="4.200" width="12.400" height="1" fill="#e8f4fc"/><path d="M7 5.200v9.400M11 5.200v9.400" stroke="#eeeeee" stroke-width="0.900"/><path d="M0.600 12.800C1 9.200 3.400 7.800 6.200 8V6l3.800 3.200-3.800 3.200v-2C4 10.200 2.200 10.800 0.600 12.800z" fill="#3cb03c" stroke="#2c8c2c" stroke-width="0.400"/></svg></div><div class="tx">Change day program</div></div>
<div class="mi" style="top:210px"><div class="ic"><svg width="16" height="16" viewBox="0 0 16 16" ><path d="M1.800 9.800A6.400 6.400 0 0 1 11.400 2.400" stroke="#50cc20" stroke-width="2.400" fill="none"/><path d="M9.600 0l5 2.600-4.800 3z" fill="#50cc20"/><path d="M14.200 6.200A6.400 6.400 0 0 1 4.600 13.600" stroke="#44bc1c" stroke-width="2.400" fill="none"/><path d="M6.400 16l-5-2.600 4.800-3z" fill="#44bc1c"/><circle cx="8" cy="8" r="4.600" fill="#eef2f6" stroke="#868e98" stroke-width="1.200"/><path d="M6 6.800L8 8.200l2.600-1.600" stroke="#444" stroke-width="0.900" fill="none"/></svg></div><div class="tx">Change cycle</div></div>
<div class="mi" style="top:236px"><div class="ic"><svg width="16" height="16" viewBox="0 0 16 16" ><circle cx="8" cy="8" r="6.700" fill="#f2f4f2" stroke="#1e2c38" stroke-width="2"/><path d="M5 11.800l6-7.600" stroke="#f09010" stroke-width="1.700"/><circle cx="5.600" cy="5.800" r="1.700" fill="#f09010"/><circle cx="10.400" cy="10.200" r="1.700" fill="#f09010"/></svg></div><div class="tx">Recalculation</div></div>
<div class="mi" style="top:262px"><div class="ic"><svg width="15" height="15" viewBox="0 0 15 15" ><circle cx="7.5" cy="7.5" r="7" fill="#2a62b4"/><path d="M7.5 7.5L9.8 0.9A7 7 0 0 1 14.4 6.6z" fill="#2da02d"/><path d="M7.5 7.5L14.4 6.6A7 7 0 0 1 14.2 9.6z" fill="#e82828"/><path d="M7.5 7.5L14.2 9.6A7 7 0 0 1 3.2 13z" fill="#f8c818"/></svg></div><div class="tx">Reports</div><div class="ar"><svg width="5" height="8" viewBox="0 0 5 8" ><path d="M0.5 0.5v7L4.500 4z" fill="#6aa2ee" stroke="#3a6cc0" stroke-width="0.7"/></svg></div></div>
<div id="msep" class="a"></div>
<div class="mi hov" style="top:294px"><div class="ic"><svg width="16" height="16" viewBox="0 0 16 16" ><path d="M2.600 1h9l2.800 2.800v11.400H2.600z" fill="#f8f8f0" stroke="#d4d4c4" stroke-width="0.600"/><path d="M11.600 1v2.800h2.800z" fill="#e0e0d4"/><rect x="3.400" y="3.800" width="10.200" height="2.600" fill="#5ca82c"/><rect x="3.400" y="3.800" width="10.200" height="1.200" fill="#84c44c"/><rect x="3.400" y="7" width="3.200" height="7" fill="#c8e4b4"/><rect x="7.200" y="7" width="6.400" height="7" fill="#e4f0d8"/><path d="M7.800 8.600h5.200M7.800 10.400h5.200M7.800 12.200h5.200M3.800 8.600h2.400M3.800 10.400h2.400M3.800 12.200h2.400" stroke="#a4cc8c" stroke-width="0.900"/></svg></div><div class="tx">View timecard</div></div>
<div class="mi" style="top:320px"><div class="ic"><svg width="16" height="16" viewBox="0 0 16 16" ><rect x="1.6" y="1" width="12.8" height="13.6" rx="1" fill="#fdfdfd" stroke="#9aa0a8" stroke-width="0.8"/><rect x="1.6" y="1" width="12.8" height="3" fill="#4a90e8"/><rect x="1.6" y="13" width="12.8" height="1.8" fill="#c0c4c8"/><rect x="4.2" y="6.2" width="1.8" height="1.8" fill="#e85820"/><rect x="7.1" y="6.2" width="1.8" height="1.8" fill="#e85820"/><rect x="10" y="6.2" width="1.8" height="1.8" fill="#e85820"/><rect x="4.2" y="9.2" width="1.8" height="1.8" fill="#e85820"/><rect x="7.1" y="9.2" width="1.8" height="1.8" fill="#e85820"/><rect x="10" y="9.2" width="1.8" height="1.8" fill="#e85820"/></svg></div><div class="tx">Yearly view</div></div>
<div class="mi" style="top:346px"><div class="ic"><svg width="16" height="16" viewBox="0 0 16 16" ><path d="M11 14.400C11.800 10.400 11.800 7.400 11 5" stroke="#7c4c1c" stroke-width="1.700" fill="none"/><path d="M11 5C8.600 2.600 6.200 3 5 5 7.400 4.200 9.400 4.600 11 5zM11 5C12.200 1.800 14.800 1.400 16.200 3.400 14.200 3.200 12.400 4 11 5zM11 5C13.800 4.800 15.600 6.400 15.800 8.800 14.400 6.800 13 5.800 11 5zM11 5C8.800 5.600 7.800 7.400 8.200 9.400 9 7.600 9.800 6.200 11 5zM11 5C10.600 2.600 9 1.200 7.200 1.400 9 2.200 10.200 3.400 11 5z" fill="#2cac2c" stroke="#1c7c1c" stroke-width="0.500"/><ellipse cx="9" cy="14.800" rx="7" ry="1.200" fill="#5c3c1c"/><circle cx="5" cy="10.600" r="4.400" fill="#f8f8f8" stroke="#8c8c8c" stroke-width="0.400"/><path d="M5 10.600L0.800 9.400A4.400 4.400 0 0 1 4.200 6.300z" fill="#ec2020"/><path d="M5 10.600L9.400 10A4.400 4.400 0 0 1 6.600 14.700z" fill="#2050d8"/><path d="M5 10.600L2.800 14.400A4.400 4.400 0 0 1 0.800 11.800z" fill="#f8cc18"/><path d="M5 10.600L6 6.300A4.400 4.400 0 0 1 9.200 9z" fill="#f8cc18"/></svg></div><div class="tx">View holiday card</div></div>
<div class="mi" style="top:372px"><div class="ic"><svg width="16" height="16" viewBox="0 0 16 16" ><circle cx="8" cy="8" r="6.500" fill="#ecdcdc" stroke="#dc1414" stroke-width="2.500"/><circle cx="8" cy="8" r="7.600" fill="none" stroke="#a80c0c" stroke-width="0.500"/><rect x="7" y="3.800" width="2.100" height="5.600" rx="0.900" fill="#c00c0c"/><circle cx="8.050" cy="11.400" r="1.250" fill="#c00c0c"/></svg></div><div class="tx">View anomalies</div></div>
<div class="mi" style="top:398px"><div class="ic"><svg width="16" height="16" viewBox="0 0 16 16" ><rect x="1.2" y="2.4" width="13.6" height="12.6" rx="1.4" fill="#fcfcfc" stroke="#7a7e86" stroke-width="1"/><rect x="1.6" y="2.8" width="12.8" height="3" fill="#6a9ad0"/><path d="M4.2 0.8v3M11.8 0.8v3" stroke="#5a6068" stroke-width="1.4"/><text x="8" y="13.2" font-family="Liberation Sans, sans-serif" font-size="8" font-weight="bold" fill="#444" text-anchor="middle">1</text></svg></div><div class="tx">Daily view</div></div>
<div class="mi" style="top:424px"><div class="ic"><svg width="16" height="16" viewBox="0 0 16 16" ><path d="M4.600 1h6l2.800 2.600v7h-8.800z" fill="#fcfcfc" stroke="#c4c4c4" stroke-width="0.600"/><path d="M6 3.600h4.400M6 5.200h5.600" stroke="#d4d4d4" stroke-width="0.800"/><path d="M1 6h5.200l1.200 1.600H15.200v7.400H1z" fill="url(#gfold)" stroke="#dca834" stroke-width="0.600"/><path d="M1 9h14.200" stroke="#fff0c0" stroke-width="0.800" opacity="0.800"/><rect x="11" y="11.200" width="3.600" height="3.400" fill="#7c9cbc"/><path d="M11.600 12h2.400M11.600 13.400h2.400" stroke="#e8f0f8" stroke-width="0.600"/></svg></div><div class="tx">View Files</div></div>
</div>
<div class="a" style="left:701px;top:435px"><svg width="20" height="25" viewBox="0 0 17 22" ><path d="M5.200 1.200c.9 0 1.500.6 1.500 1.500v5.100l.3-.1V6.600c0-.8.600-1.400 1.300-1.400s1.300.5 1.300 1.300v1l.300 0V7.300c0-.700.600-1.200 1.200-1.200s1.200.5 1.200 1.200v1.200l.300.100c.100-.500.500-.900 1.100-.900.700 0 1.200.5 1.200 1.300v4.800c0 2.200-.700 3.500-1.300 4.700v2.100H6.600v-2c-.9-1-2.200-2.800-3.200-4.600-.700-1.300-1.600-2.600-2.100-3.400-.4-.7-.200-1.400.4-1.700.6-.3 1.300-.1 1.700.5l.3.500V2.700c0-.9.600-1.500 1.500-1.500z" fill="#fff" stroke="#000" stroke-width="1" stroke-linejoin="round"/><path d="M8 12.500v4M10.300 12.500v4M12.600 12.500v4" stroke="#000" stroke-width="0.800"/></svg></div>
</body></html>
